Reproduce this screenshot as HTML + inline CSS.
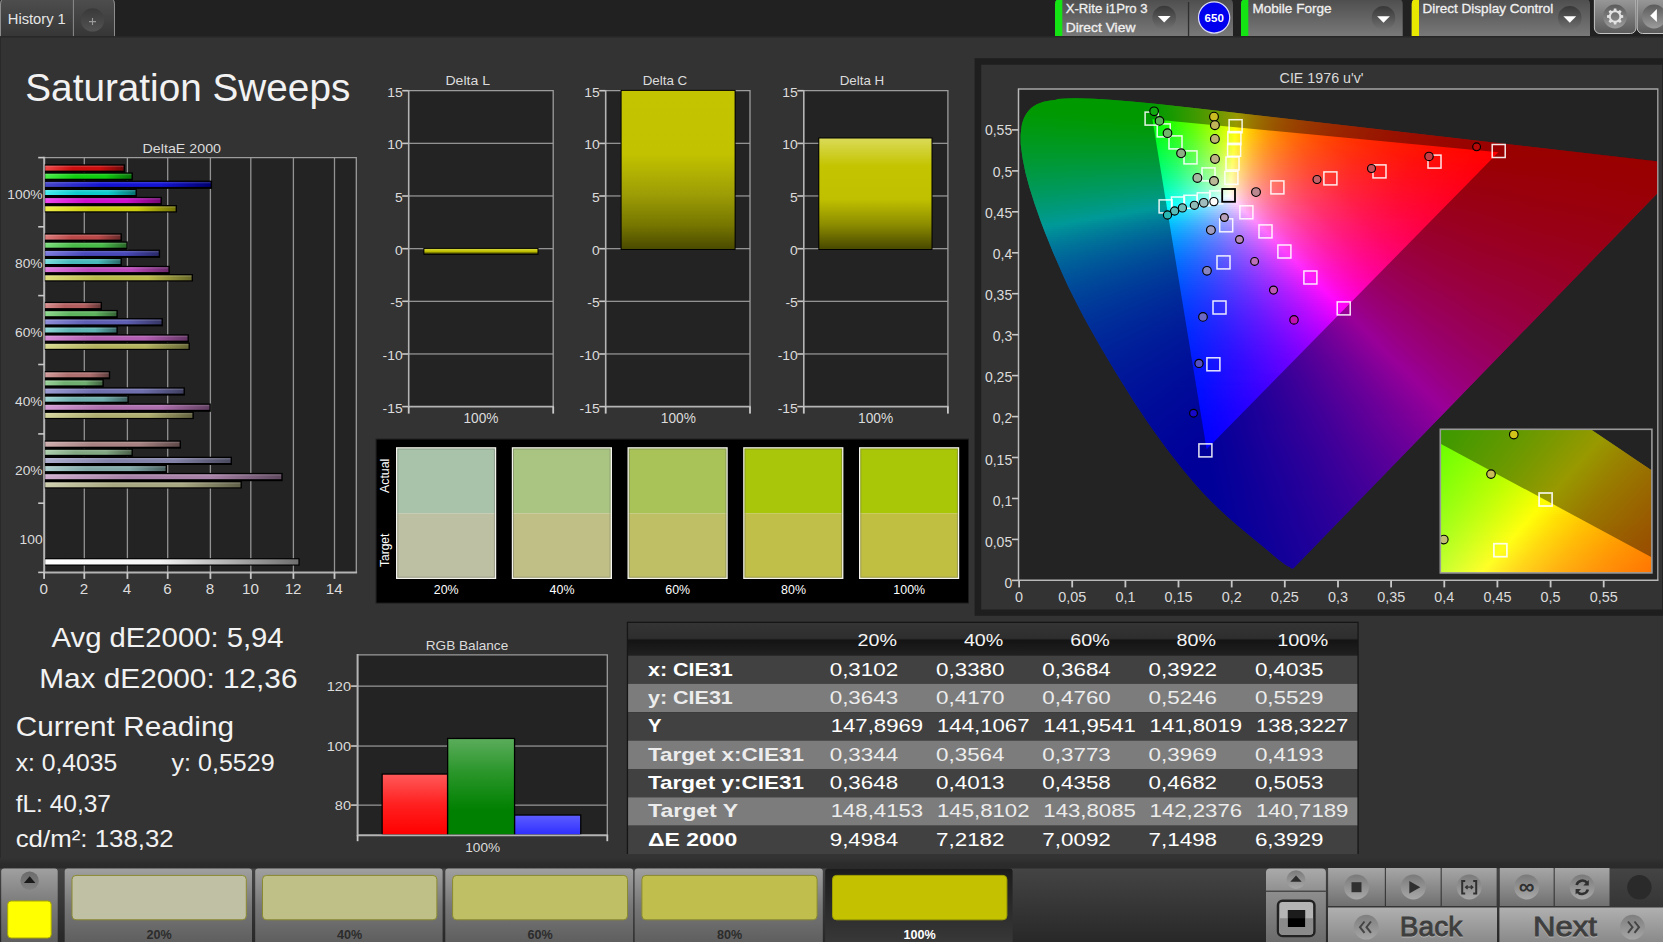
<!DOCTYPE html>
<html><head><meta charset="utf-8"><title>Saturation Sweeps</title>
<style>
html,body{margin:0;padding:0;background:#333;}
body{width:1663px;height:942px;overflow:hidden;position:relative;font-family:"Liberation Sans",sans-serif;}
svg{position:absolute;left:0;top:0;font-family:"Liberation Sans",sans-serif;}
.f{position:absolute;overflow:hidden}
.f i{position:absolute;display:block}
</style></head><body>
<svg width="1663" height="942" viewBox="0 0 1663 942">
<defs>
<linearGradient id="gTab" x1="0" y1="0" x2="0" y2="1"><stop offset="0" stop-color="#4e4e4e"/><stop offset="1" stop-color="#797979"/></linearGradient>
<linearGradient id="gHist" x1="0" y1="0" x2="0" y2="1"><stop offset="0" stop-color="#4e4e4e"/><stop offset="1" stop-color="#363636"/></linearGradient>
<linearGradient id="gDD" x1="0" y1="0" x2="0" y2="1"><stop offset="0" stop-color="#383838"/><stop offset="1" stop-color="#707070"/></linearGradient>
<linearGradient id="gBtn" x1="0" y1="0" x2="0" y2="1"><stop offset="0" stop-color="#4c4c4c"/><stop offset="1" stop-color="#7a7a7a"/></linearGradient>
<linearGradient id="gPlus" x1="0" y1="0" x2="0" y2="1"><stop offset="0" stop-color="#393939"/><stop offset="1" stop-color="#525252"/></linearGradient>
<linearGradient id="gBtn2" x1="0" y1="0" x2="0" y2="1"><stop offset="0" stop-color="#a2a2a2"/><stop offset="1" stop-color="#5a5a5a"/></linearGradient>
<linearGradient id="gDD2" x1="0" y1="0" x2="0" y2="1"><stop offset="0" stop-color="#5a5a5a"/><stop offset="1" stop-color="#9c9c9c"/></linearGradient>
<linearGradient id="b1" x1="0" y1="0" x2="1" y2="0"><stop offset="0" stop-color="#ee4848"/><stop offset=".35" stop-color="#cc0e0e"/><stop offset=".7" stop-color="#cc0e0e"/><stop offset="1" stop-color="#730808"/></linearGradient>
<linearGradient id="b2" x1="0" y1="0" x2="1" y2="0"><stop offset="0" stop-color="#48ee48"/><stop offset=".35" stop-color="#0ecc0e"/><stop offset=".7" stop-color="#0ecc0e"/><stop offset="1" stop-color="#087308"/></linearGradient>
<linearGradient id="b3" x1="0" y1="0" x2="1" y2="0"><stop offset="0" stop-color="#4646c8"/><stop offset=".35" stop-color="#1414d2"/><stop offset=".7" stop-color="#1414d2"/><stop offset="1" stop-color="#00006e"/></linearGradient>
<linearGradient id="b4" x1="0" y1="0" x2="1" y2="0"><stop offset="0" stop-color="#48eeee"/><stop offset=".35" stop-color="#0ecccc"/><stop offset=".7" stop-color="#0ecccc"/><stop offset="1" stop-color="#087373"/></linearGradient>
<linearGradient id="b5" x1="0" y1="0" x2="1" y2="0"><stop offset="0" stop-color="#ee48ee"/><stop offset=".35" stop-color="#cc0ecc"/><stop offset=".7" stop-color="#cc0ecc"/><stop offset="1" stop-color="#730873"/></linearGradient>
<linearGradient id="b6" x1="0" y1="0" x2="1" y2="0"><stop offset="0" stop-color="#eeee48"/><stop offset=".35" stop-color="#cccc0e"/><stop offset=".7" stop-color="#cccc0e"/><stop offset="1" stop-color="#737308"/></linearGradient>
<linearGradient id="b7" x1="0" y1="0" x2="1" y2="0"><stop offset="0" stop-color="#de7b7b"/><stop offset=".35" stop-color="#ba4848"/><stop offset=".7" stop-color="#ba4848"/><stop offset="1" stop-color="#692929"/></linearGradient>
<linearGradient id="b8" x1="0" y1="0" x2="1" y2="0"><stop offset="0" stop-color="#7bde7b"/><stop offset=".35" stop-color="#48ba48"/><stop offset=".7" stop-color="#48ba48"/><stop offset="1" stop-color="#296929"/></linearGradient>
<linearGradient id="b9" x1="0" y1="0" x2="1" y2="0"><stop offset="0" stop-color="#7b7bde"/><stop offset=".35" stop-color="#4848ba"/><stop offset=".7" stop-color="#4848ba"/><stop offset="1" stop-color="#292969"/></linearGradient>
<linearGradient id="b10" x1="0" y1="0" x2="1" y2="0"><stop offset="0" stop-color="#7bdede"/><stop offset=".35" stop-color="#48baba"/><stop offset=".7" stop-color="#48baba"/><stop offset="1" stop-color="#296969"/></linearGradient>
<linearGradient id="b11" x1="0" y1="0" x2="1" y2="0"><stop offset="0" stop-color="#de7bde"/><stop offset=".35" stop-color="#ba48ba"/><stop offset=".7" stop-color="#ba48ba"/><stop offset="1" stop-color="#692969"/></linearGradient>
<linearGradient id="b12" x1="0" y1="0" x2="1" y2="0"><stop offset="0" stop-color="#dede7b"/><stop offset=".35" stop-color="#baba48"/><stop offset=".7" stop-color="#baba48"/><stop offset="1" stop-color="#696929"/></linearGradient>
<linearGradient id="b13" x1="0" y1="0" x2="1" y2="0"><stop offset="0" stop-color="#d98e8e"/><stop offset=".35" stop-color="#b35e5e"/><stop offset=".7" stop-color="#b35e5e"/><stop offset="1" stop-color="#653535"/></linearGradient>
<linearGradient id="b14" x1="0" y1="0" x2="1" y2="0"><stop offset="0" stop-color="#8ed98e"/><stop offset=".35" stop-color="#5eb35e"/><stop offset=".7" stop-color="#5eb35e"/><stop offset="1" stop-color="#356535"/></linearGradient>
<linearGradient id="b15" x1="0" y1="0" x2="1" y2="0"><stop offset="0" stop-color="#8e8ed9"/><stop offset=".35" stop-color="#5e5eb3"/><stop offset=".7" stop-color="#5e5eb3"/><stop offset="1" stop-color="#353565"/></linearGradient>
<linearGradient id="b16" x1="0" y1="0" x2="1" y2="0"><stop offset="0" stop-color="#8ed9d9"/><stop offset=".35" stop-color="#5eb3b3"/><stop offset=".7" stop-color="#5eb3b3"/><stop offset="1" stop-color="#356565"/></linearGradient>
<linearGradient id="b17" x1="0" y1="0" x2="1" y2="0"><stop offset="0" stop-color="#d98ed9"/><stop offset=".35" stop-color="#b35eb3"/><stop offset=".7" stop-color="#b35eb3"/><stop offset="1" stop-color="#653565"/></linearGradient>
<linearGradient id="b18" x1="0" y1="0" x2="1" y2="0"><stop offset="0" stop-color="#d9d98e"/><stop offset=".35" stop-color="#b3b35e"/><stop offset=".7" stop-color="#b3b35e"/><stop offset="1" stop-color="#656535"/></linearGradient>
<linearGradient id="b19" x1="0" y1="0" x2="1" y2="0"><stop offset="0" stop-color="#d49d9d"/><stop offset=".35" stop-color="#ae6f6f"/><stop offset=".7" stop-color="#ae6f6f"/><stop offset="1" stop-color="#623f3f"/></linearGradient>
<linearGradient id="b20" x1="0" y1="0" x2="1" y2="0"><stop offset="0" stop-color="#9dd49d"/><stop offset=".35" stop-color="#6fae6f"/><stop offset=".7" stop-color="#6fae6f"/><stop offset="1" stop-color="#3f623f"/></linearGradient>
<linearGradient id="b21" x1="0" y1="0" x2="1" y2="0"><stop offset="0" stop-color="#9d9dd4"/><stop offset=".35" stop-color="#6f6fae"/><stop offset=".7" stop-color="#6f6fae"/><stop offset="1" stop-color="#3f3f62"/></linearGradient>
<linearGradient id="b22" x1="0" y1="0" x2="1" y2="0"><stop offset="0" stop-color="#9dd4d4"/><stop offset=".35" stop-color="#6faeae"/><stop offset=".7" stop-color="#6faeae"/><stop offset="1" stop-color="#3f6262"/></linearGradient>
<linearGradient id="b23" x1="0" y1="0" x2="1" y2="0"><stop offset="0" stop-color="#d49dd4"/><stop offset=".35" stop-color="#ae6fae"/><stop offset=".7" stop-color="#ae6fae"/><stop offset="1" stop-color="#623f62"/></linearGradient>
<linearGradient id="b24" x1="0" y1="0" x2="1" y2="0"><stop offset="0" stop-color="#d4d49d"/><stop offset=".35" stop-color="#aeae6f"/><stop offset=".7" stop-color="#aeae6f"/><stop offset="1" stop-color="#62623f"/></linearGradient>
<linearGradient id="b25" x1="0" y1="0" x2="1" y2="0"><stop offset="0" stop-color="#cfaeae"/><stop offset=".35" stop-color="#a88282"/><stop offset=".7" stop-color="#a88282"/><stop offset="1" stop-color="#5f4949"/></linearGradient>
<linearGradient id="b26" x1="0" y1="0" x2="1" y2="0"><stop offset="0" stop-color="#aecfae"/><stop offset=".35" stop-color="#82a882"/><stop offset=".7" stop-color="#82a882"/><stop offset="1" stop-color="#495f49"/></linearGradient>
<linearGradient id="b27" x1="0" y1="0" x2="1" y2="0"><stop offset="0" stop-color="#aeaecf"/><stop offset=".35" stop-color="#8282a8"/><stop offset=".7" stop-color="#8282a8"/><stop offset="1" stop-color="#49495f"/></linearGradient>
<linearGradient id="b28" x1="0" y1="0" x2="1" y2="0"><stop offset="0" stop-color="#aecfcf"/><stop offset=".35" stop-color="#82a8a8"/><stop offset=".7" stop-color="#82a8a8"/><stop offset="1" stop-color="#495f5f"/></linearGradient>
<linearGradient id="b29" x1="0" y1="0" x2="1" y2="0"><stop offset="0" stop-color="#cfaecf"/><stop offset=".35" stop-color="#a882a8"/><stop offset=".7" stop-color="#a882a8"/><stop offset="1" stop-color="#5f495f"/></linearGradient>
<linearGradient id="b30" x1="0" y1="0" x2="1" y2="0"><stop offset="0" stop-color="#cfcfae"/><stop offset=".35" stop-color="#a8a882"/><stop offset=".7" stop-color="#a8a882"/><stop offset="1" stop-color="#5f5f49"/></linearGradient>
<linearGradient id="bw" x1="0" y1="0" x2="1" y2="0"><stop offset="0" stop-color="#fff"/><stop offset=".45" stop-color="#f4f4f4"/><stop offset="1" stop-color="#6e6e6e"/></linearGradient>
<linearGradient id="gYL" x1="0" y1="0" x2="0" y2="1"><stop offset="0" stop-color="#d2d23c"/><stop offset=".5" stop-color="#c4c400"/><stop offset="1" stop-color="#3c3c00"/></linearGradient>
<linearGradient id="gYC" x1="0" y1="0" x2="0" y2="1"><stop offset="0" stop-color="#c4c400"/><stop offset=".4" stop-color="#c2c200"/><stop offset=".66" stop-color="#9c9c06"/><stop offset=".85" stop-color="#767600"/><stop offset="1" stop-color="#4a4a00"/></linearGradient>
<linearGradient id="gYH" x1="0" y1="0" x2="0" y2="1"><stop offset="0" stop-color="#dada58"/><stop offset=".25" stop-color="#c4c400"/><stop offset=".55" stop-color="#c0c000"/><stop offset=".78" stop-color="#8c8c00"/><stop offset="1" stop-color="#484800"/></linearGradient>
<linearGradient id="gR" x1="0" y1="0" x2="0" y2="1"><stop offset="0" stop-color="#ff5858"/><stop offset=".5" stop-color="#ff2020"/><stop offset="1" stop-color="#ff0000"/></linearGradient>
<linearGradient id="gG" x1="0" y1="0" x2="0" y2="1"><stop offset="0" stop-color="#5aac5a"/><stop offset=".35" stop-color="#2a962a"/><stop offset=".75" stop-color="#008000"/><stop offset="1" stop-color="#008000"/></linearGradient>
<linearGradient id="gB" x1="0" y1="0" x2="0" y2="1"><stop offset="0" stop-color="#5c5cff"/><stop offset="1" stop-color="#3030ff"/></linearGradient>
<linearGradient id="gTH" x1="0" y1="0" x2="0" y2="1"><stop offset="0" stop-color="#343434"/><stop offset=".47" stop-color="#2e2e2e"/><stop offset=".53" stop-color="#141414"/><stop offset="1" stop-color="#202020"/></linearGradient>
<linearGradient id="gBar" x1="0" y1="0" x2="0" y2="1"><stop offset="0" stop-color="#444"/><stop offset="1" stop-color="#282828"/></linearGradient>
<linearGradient id="gTile" x1="0" y1="0" x2="0" y2="1"><stop offset="0" stop-color="#a0a0a0"/><stop offset=".5" stop-color="#787878"/><stop offset="1" stop-color="#5e5e5e"/></linearGradient>
<linearGradient id="gSel" x1="0" y1="0" x2="0" y2="1"><stop offset="0" stop-color="#1c1c1c"/><stop offset="1" stop-color="#383838"/></linearGradient>
<linearGradient id="gCtl" x1="0" y1="0" x2="0" y2="1"><stop offset="0" stop-color="#a6a6a6"/><stop offset="1" stop-color="#707070"/></linearGradient>
<linearGradient id="gCir" x1="0" y1="0" x2="0" y2="1"><stop offset="0" stop-color="#7a7a7a"/><stop offset="1" stop-color="#a8a8a8"/></linearGradient>
<linearGradient id="gNav" x1="0" y1="0" x2="0" y2="1"><stop offset="0" stop-color="#b0b0b0"/><stop offset="1" stop-color="#888"/></linearGradient>
<linearGradient id="gSh" x1="0" y1="0" x2="0" y2="1"><stop offset="0" stop-color="#333"/><stop offset=".5" stop-color="#2c2c2c"/><stop offset="1" stop-color="#2a2a2a"/></linearGradient>
<linearGradient id="gLP1" x1="0" y1="0" x2="0" y2="1"><stop offset="0" stop-color="#aaa"/><stop offset="1" stop-color="#909090"/></linearGradient>
<linearGradient id="gLP2" x1="0" y1="0" x2="0" y2="1"><stop offset="0" stop-color="#8e8e8e"/><stop offset="1" stop-color="#6a6a6a"/></linearGradient>
</defs>
<rect x="0" y="0" width="1663" height="36.5" fill="#212121"/>
<path d="M0 36.3 V4 Q0 -1 4 -1 H110.5 Q115 -1 115 4 V36.3 Z" fill="url(#gHist)"/>
<path d="M0.5 36.3 V4 Q0.5 0 3 -1 M114.5 36.3 V4 Q114.5 0 112 -1 M73.4 0 V36.3" fill="none" stroke="#8c8c8c" stroke-width="1"/>
<rect x="0" y="36.3" width="1663" height="1.2" fill="#272727"/>
<rect x="0" y="37.5" width="1" height="831" fill="#292929"/>
<text x="7.8" y="23.9" font-size="13.8" fill="#e6e6e6" textLength="58.0" lengthAdjust="spacingAndGlyphs">History 1</text>
<circle cx="92.5" cy="19.9" r="11.7" fill="url(#gPlus)"/>
<path d="M89 21.6 h7 M92.5 18.1 v7" stroke="#9a9a9a" stroke-width="1.1"/>
<path d="M1055.0 36.1 V4 Q1055.0 -1 1060.0 -1 H1228.0 Q1233.0 -1 1233.0 4 V36.1 Z" fill="url(#gTab)"/>
<path d="M1055.0 36.1 V4 Q1055.0 -1 1060.0 -1 H1062.3 V36.1 Z" fill="#14e414"/>
<text x="1065.7" y="13.2" font-size="13.2" fill="#f0f0f0" textLength="82.0" lengthAdjust="spacingAndGlyphs" stroke="#f0f0f0" stroke-width=".3">X-Rite i1Pro 3</text>
<text x="1065.7" y="31.8" font-size="13.2" fill="#f0f0f0" textLength="69.7" lengthAdjust="spacingAndGlyphs" stroke="#f0f0f0" stroke-width=".3">Direct View</text>
<circle cx="1164.2" cy="17.6" r="11.8" fill="url(#gDD)"/>
<path d="M1157.8 15.9 h12.8 l-6.4 6.6 z" fill="#fff"/>
<rect x="1187.9" y="2" width="1.3" height="34" fill="#2e2e2e"/>
<circle cx="1214.1" cy="17.5" r="15.6" fill="#0000ee" stroke="#dcdcfa" stroke-width="1.2"/>
<text x="1214.2" y="22.1" font-size="11.6" fill="#fff" text-anchor="middle" textLength="19.2" lengthAdjust="spacingAndGlyphs" font-weight="bold">650</text>
<path d="M1241.0 36.1 V4 Q1241.0 -1 1246.0 -1 H1397.7 Q1402.7 -1 1402.7 4 V36.1 Z" fill="url(#gTab)"/>
<path d="M1241.0 36.1 V4 Q1241.0 -1 1246.0 -1 H1248.3 V36.1 Z" fill="#14e414"/>
<text x="1252.5" y="13.2" font-size="13.2" fill="#f0f0f0" textLength="79.0" lengthAdjust="spacingAndGlyphs" stroke="#f0f0f0" stroke-width=".3">Mobile Forge</text>
<circle cx="1383.5" cy="17.9" r="11.8" fill="url(#gDD)"/>
<path d="M1377.1 16.2 h12.8 l-6.4 6.6 z" fill="#fff"/>
<path d="M1411.7 36.1 V4 Q1411.7 -1 1416.7 -1 H1585.0 Q1590.0 -1 1590.0 4 V36.1 Z" fill="url(#gTab)"/>
<path d="M1411.7 36.1 V4 Q1411.7 -1 1416.7 -1 H1419.0 V36.1 Z" fill="#e8e800"/>
<text x="1422.5" y="13.2" font-size="13.2" fill="#f0f0f0" textLength="130.8" lengthAdjust="spacingAndGlyphs" stroke="#f0f0f0" stroke-width=".3">Direct Display Control</text>
<circle cx="1569.8" cy="17.9" r="11.8" fill="url(#gDD)"/>
<path d="M1563.4 16.2 h12.8 l-6.4 6.6 z" fill="#fff"/>
<rect x="1594.4" y="-6" width="41.6" height="39.5" rx="5.5" fill="url(#gBtn2)" stroke="#c4c4c4" stroke-width="1"/>
<circle cx="1615.1" cy="16.5" r="11.9" fill="url(#gDD2)"/>
<path d="M1613.87 8.39 L1616.33 8.39 L1616.60 10.38 L1618.37 11.11 L1619.97 9.90 L1621.70 11.63 L1620.49 13.23 L1621.22 15.00 L1623.21 15.27 L1623.21 17.73 L1621.22 18.00 L1620.49 19.77 L1621.70 21.37 L1619.97 23.10 L1618.37 21.89 L1616.60 22.62 L1616.33 24.61 L1613.87 24.61 L1613.60 22.62 L1611.83 21.89 L1610.23 23.10 L1608.50 21.37 L1609.71 19.77 L1608.98 18.00 L1606.99 17.73 L1606.99 15.27 L1608.98 15.00 L1609.71 13.23 L1608.50 11.63 L1610.23 9.90 L1611.83 11.11 L1613.60 10.38 Z M1619.4 16.5 a4.3 4.3 0 1 0 -8.6 0 a4.3 4.3 0 1 0 8.6 0 Z" fill="#e2e2e2" fill-rule="evenodd"/>
<rect x="1637.2" y="-6" width="40" height="39.5" rx="5.5" fill="url(#gBtn2)" stroke="#c4c4c4" stroke-width="1"/>
<circle cx="1654" cy="16.5" r="11.9" fill="url(#gDD2)"/>
<path d="M1656.9 9.1 V22.1 L1650.2 15.7 Z" fill="#fff"/>
<text x="25.3" y="101.0" font-size="38.0" fill="#f2f2f2" textLength="325.0" lengthAdjust="spacingAndGlyphs">Saturation Sweeps</text>
<rect x="44.2" y="157.6" width="312.1" height="414.8" fill="#232323"/>
<rect x="83.65" y="157.6" width="1.3" height="414.8" fill="#929292"/>
<rect x="126.75" y="157.6" width="1.3" height="414.8" fill="#929292"/>
<rect x="167.05" y="157.6" width="1.3" height="414.8" fill="#929292"/>
<rect x="209.75" y="157.6" width="1.3" height="414.8" fill="#929292"/>
<rect x="250.15" y="157.6" width="1.3" height="414.8" fill="#929292"/>
<rect x="292.75" y="157.6" width="1.3" height="414.8" fill="#929292"/>
<rect x="333.85" y="157.6" width="1.3" height="414.8" fill="#929292"/>
<path d="M44.2 157.6 H356.3 V572.4" fill="none" stroke="#9c9c9c" stroke-width="1.3"/>
<path d="M44.2 156.8 V572.4 H357.1" fill="none" stroke="#b4b4b4" stroke-width="2"/>
<rect x="38.2" y="156.8" width="6" height="1.6" fill="#c8c8c8"/>
<rect x="38.2" y="226.0" width="6" height="1.6" fill="#c8c8c8"/>
<rect x="38.2" y="294.8" width="6" height="1.6" fill="#c8c8c8"/>
<rect x="38.2" y="363.7" width="6" height="1.6" fill="#c8c8c8"/>
<rect x="38.2" y="433.1" width="6" height="1.6" fill="#c8c8c8"/>
<rect x="38.2" y="502.4" width="6" height="1.6" fill="#c8c8c8"/>
<rect x="38.2" y="571.6" width="6" height="1.6" fill="#c8c8c8"/>
<rect x="43.2" y="572.4" width="1.8" height="6.5" fill="#c8c8c8"/>
<text x="43.8" y="593.6" font-size="15.2" fill="#dcdcdc" text-anchor="middle">0</text>
<rect x="83.4" y="572.4" width="1.8" height="6.5" fill="#c8c8c8"/>
<text x="84.0" y="593.6" font-size="15.2" fill="#dcdcdc" text-anchor="middle">2</text>
<rect x="126.5" y="572.4" width="1.8" height="6.5" fill="#c8c8c8"/>
<text x="127.1" y="593.6" font-size="15.2" fill="#dcdcdc" text-anchor="middle">4</text>
<rect x="166.8" y="572.4" width="1.8" height="6.5" fill="#c8c8c8"/>
<text x="167.4" y="593.6" font-size="15.2" fill="#dcdcdc" text-anchor="middle">6</text>
<rect x="209.5" y="572.4" width="1.8" height="6.5" fill="#c8c8c8"/>
<text x="210.1" y="593.6" font-size="15.2" fill="#dcdcdc" text-anchor="middle">8</text>
<rect x="249.9" y="572.4" width="1.8" height="6.5" fill="#c8c8c8"/>
<text x="250.5" y="593.6" font-size="15.2" fill="#dcdcdc" text-anchor="middle">10</text>
<rect x="292.5" y="572.4" width="1.8" height="6.5" fill="#c8c8c8"/>
<text x="293.1" y="593.6" font-size="15.2" fill="#dcdcdc" text-anchor="middle">12</text>
<rect x="333.6" y="572.4" width="1.8" height="6.5" fill="#c8c8c8"/>
<text x="334.2" y="593.6" font-size="15.2" fill="#dcdcdc" text-anchor="middle">14</text>
<text x="42.6" y="198.5" font-size="13.4" fill="#dcdcdc" text-anchor="end" textLength="35.3" lengthAdjust="spacingAndGlyphs">100%</text>
<text x="42.6" y="267.6" font-size="13.4" fill="#dcdcdc" text-anchor="end" textLength="27.6" lengthAdjust="spacingAndGlyphs">80%</text>
<text x="42.6" y="336.7" font-size="13.4" fill="#dcdcdc" text-anchor="end" textLength="27.6" lengthAdjust="spacingAndGlyphs">60%</text>
<text x="42.6" y="405.9" font-size="13.4" fill="#dcdcdc" text-anchor="end" textLength="27.6" lengthAdjust="spacingAndGlyphs">40%</text>
<text x="42.6" y="475.0" font-size="13.4" fill="#dcdcdc" text-anchor="end" textLength="27.6" lengthAdjust="spacingAndGlyphs">20%</text>
<text x="42.6" y="544.1" font-size="13.4" fill="#dcdcdc" text-anchor="end" textLength="23.0" lengthAdjust="spacingAndGlyphs">100</text>
<text x="181.8" y="152.8" font-size="13.3" fill="#dcdcdc" text-anchor="middle" textLength="78.5" lengthAdjust="spacingAndGlyphs">DeltaE 2000</text>
<rect x="44.8" y="164.3" width="80.2" height="8.3" fill="#000"/>
<rect x="45.2" y="165.6" width="78.4" height="5" fill="url(#b1)"/>
<rect x="45.2" y="165.6" width="78.4" height="1.5" fill="#fff" opacity=".14"/>
<rect x="44.8" y="172.4" width="88.1" height="8.3" fill="#000"/>
<rect x="45.2" y="173.7" width="86.3" height="5" fill="url(#b2)"/>
<rect x="45.2" y="173.7" width="86.3" height="1.5" fill="#fff" opacity=".14"/>
<rect x="44.8" y="180.6" width="167.3" height="8.3" fill="#000"/>
<rect x="45.2" y="181.9" width="165.5" height="5" fill="url(#b3)"/>
<rect x="45.2" y="181.9" width="165.5" height="1.5" fill="#fff" opacity=".14"/>
<rect x="44.8" y="188.7" width="92.1" height="8.3" fill="#000"/>
<rect x="45.2" y="190.0" width="90.3" height="5" fill="url(#b4)"/>
<rect x="45.2" y="190.0" width="90.3" height="1.5" fill="#fff" opacity=".14"/>
<rect x="44.8" y="196.8" width="117.1" height="8.3" fill="#000"/>
<rect x="45.2" y="198.1" width="115.3" height="5" fill="url(#b5)"/>
<rect x="45.2" y="198.1" width="115.3" height="1.5" fill="#fff" opacity=".14"/>
<rect x="44.8" y="205.0" width="132.2" height="7.5" fill="#000"/>
<rect x="45.2" y="206.3" width="130.4" height="5" fill="url(#b6)"/>
<rect x="45.2" y="206.3" width="130.4" height="1.5" fill="#fff" opacity=".14"/>
<rect x="44.8" y="233.3" width="77.1" height="8.3" fill="#000"/>
<rect x="45.2" y="234.6" width="75.3" height="5" fill="url(#b7)"/>
<rect x="45.2" y="234.6" width="75.3" height="1.5" fill="#fff" opacity=".14"/>
<rect x="44.8" y="241.4" width="83.0" height="8.3" fill="#000"/>
<rect x="45.2" y="242.7" width="81.2" height="5" fill="url(#b8)"/>
<rect x="45.2" y="242.7" width="81.2" height="1.5" fill="#fff" opacity=".14"/>
<rect x="44.8" y="249.6" width="115.3" height="8.3" fill="#000"/>
<rect x="45.2" y="250.9" width="113.5" height="5" fill="url(#b9)"/>
<rect x="45.2" y="250.9" width="113.5" height="1.5" fill="#fff" opacity=".14"/>
<rect x="44.8" y="257.7" width="77.1" height="8.3" fill="#000"/>
<rect x="45.2" y="259.0" width="75.3" height="5" fill="url(#b10)"/>
<rect x="45.2" y="259.0" width="75.3" height="1.5" fill="#fff" opacity=".14"/>
<rect x="44.8" y="265.8" width="125.0" height="8.3" fill="#000"/>
<rect x="45.2" y="267.1" width="123.2" height="5" fill="url(#b11)"/>
<rect x="45.2" y="267.1" width="123.2" height="1.5" fill="#fff" opacity=".14"/>
<rect x="44.8" y="274.0" width="148.2" height="7.5" fill="#000"/>
<rect x="45.2" y="275.3" width="146.4" height="5" fill="url(#b12)"/>
<rect x="45.2" y="275.3" width="146.4" height="1.5" fill="#fff" opacity=".14"/>
<rect x="44.8" y="301.8" width="57.2" height="8.3" fill="#000"/>
<rect x="45.2" y="303.1" width="55.4" height="5" fill="url(#b13)"/>
<rect x="45.2" y="303.1" width="55.4" height="1.5" fill="#fff" opacity=".14"/>
<rect x="44.8" y="309.9" width="73.0" height="8.3" fill="#000"/>
<rect x="45.2" y="311.2" width="71.2" height="5" fill="url(#b14)"/>
<rect x="45.2" y="311.2" width="71.2" height="1.5" fill="#fff" opacity=".14"/>
<rect x="44.8" y="318.1" width="118.1" height="8.3" fill="#000"/>
<rect x="45.2" y="319.4" width="116.3" height="5" fill="url(#b15)"/>
<rect x="45.2" y="319.4" width="116.3" height="1.5" fill="#fff" opacity=".14"/>
<rect x="44.8" y="326.2" width="73.0" height="8.3" fill="#000"/>
<rect x="45.2" y="327.5" width="71.2" height="5" fill="url(#b16)"/>
<rect x="45.2" y="327.5" width="71.2" height="1.5" fill="#fff" opacity=".14"/>
<rect x="44.8" y="334.3" width="144.1" height="8.3" fill="#000"/>
<rect x="45.2" y="335.6" width="142.3" height="5" fill="url(#b17)"/>
<rect x="45.2" y="335.6" width="142.3" height="1.5" fill="#fff" opacity=".14"/>
<rect x="44.8" y="342.5" width="145.1" height="7.5" fill="#000"/>
<rect x="45.2" y="343.8" width="143.3" height="5" fill="url(#b18)"/>
<rect x="45.2" y="343.8" width="143.3" height="1.5" fill="#fff" opacity=".14"/>
<rect x="44.8" y="371.0" width="65.4" height="8.3" fill="#000"/>
<rect x="45.2" y="372.3" width="63.6" height="5" fill="url(#b19)"/>
<rect x="45.2" y="372.3" width="63.6" height="1.5" fill="#fff" opacity=".14"/>
<rect x="44.8" y="379.1" width="59.0" height="8.3" fill="#000"/>
<rect x="45.2" y="380.4" width="57.2" height="5" fill="url(#b20)"/>
<rect x="45.2" y="380.4" width="57.2" height="1.5" fill="#fff" opacity=".14"/>
<rect x="44.8" y="387.3" width="140.1" height="8.3" fill="#000"/>
<rect x="45.2" y="388.6" width="138.3" height="5" fill="url(#b21)"/>
<rect x="45.2" y="388.6" width="138.3" height="1.5" fill="#fff" opacity=".14"/>
<rect x="44.8" y="395.4" width="84.0" height="8.3" fill="#000"/>
<rect x="45.2" y="396.7" width="82.2" height="5" fill="url(#b22)"/>
<rect x="45.2" y="396.7" width="82.2" height="1.5" fill="#fff" opacity=".14"/>
<rect x="44.8" y="403.5" width="166.0" height="8.3" fill="#000"/>
<rect x="45.2" y="404.8" width="164.2" height="5" fill="url(#b23)"/>
<rect x="45.2" y="404.8" width="164.2" height="1.5" fill="#fff" opacity=".14"/>
<rect x="44.8" y="411.6" width="149.0" height="7.5" fill="#000"/>
<rect x="45.2" y="412.9" width="147.2" height="5" fill="url(#b24)"/>
<rect x="45.2" y="412.9" width="147.2" height="1.5" fill="#fff" opacity=".14"/>
<rect x="44.8" y="440.4" width="136.2" height="8.3" fill="#000"/>
<rect x="45.2" y="441.7" width="134.4" height="5" fill="url(#b25)"/>
<rect x="45.2" y="441.7" width="134.4" height="1.5" fill="#fff" opacity=".14"/>
<rect x="44.8" y="448.5" width="88.1" height="8.3" fill="#000"/>
<rect x="45.2" y="449.8" width="86.3" height="5" fill="url(#b26)"/>
<rect x="45.2" y="449.8" width="86.3" height="1.5" fill="#fff" opacity=".14"/>
<rect x="44.8" y="456.7" width="187.2" height="8.3" fill="#000"/>
<rect x="45.2" y="458.0" width="185.4" height="5" fill="url(#b27)"/>
<rect x="45.2" y="458.0" width="185.4" height="1.5" fill="#fff" opacity=".14"/>
<rect x="44.8" y="464.8" width="122.2" height="8.3" fill="#000"/>
<rect x="45.2" y="466.1" width="120.4" height="5" fill="url(#b28)"/>
<rect x="45.2" y="466.1" width="120.4" height="1.5" fill="#fff" opacity=".14"/>
<rect x="44.8" y="472.9" width="237.9" height="8.3" fill="#000"/>
<rect x="45.2" y="474.2" width="236.1" height="5" fill="url(#b29)"/>
<rect x="45.2" y="474.2" width="236.1" height="1.5" fill="#fff" opacity=".14"/>
<rect x="44.8" y="481.0" width="197.1" height="7.5" fill="#000"/>
<rect x="45.2" y="482.3" width="195.3" height="5" fill="url(#b30)"/>
<rect x="45.2" y="482.3" width="195.3" height="1.5" fill="#fff" opacity=".14"/>
<rect x="45.2" y="558.2" width="254.4" height="7.4" fill="#000"/>
<rect x="45.2" y="559.3" width="253.2" height="5.2" fill="url(#bw)"/>
<rect x="408.7" y="90.7" width="144.5" height="315.9" fill="#232323"/>
<rect x="402.2" y="89.9" width="6.5" height="1.6" fill="#c8c8c8"/>
<text x="402.7" y="96.7" font-size="13.7" fill="#dcdcdc" text-anchor="end" textLength="15.5" lengthAdjust="spacingAndGlyphs">15</text>
<rect x="408.7" y="142.7" width="144.5" height="1.3" fill="#929292"/>
<rect x="402.2" y="142.6" width="6.5" height="1.6" fill="#c8c8c8"/>
<text x="402.7" y="149.4" font-size="13.7" fill="#dcdcdc" text-anchor="end" textLength="15.5" lengthAdjust="spacingAndGlyphs">10</text>
<rect x="408.7" y="195.3" width="144.5" height="1.3" fill="#929292"/>
<rect x="402.2" y="195.2" width="6.5" height="1.6" fill="#c8c8c8"/>
<text x="402.7" y="202.0" font-size="13.7" fill="#dcdcdc" text-anchor="end" textLength="7.7" lengthAdjust="spacingAndGlyphs">5</text>
<rect x="408.7" y="248.0" width="144.5" height="1.3" fill="#929292"/>
<rect x="402.2" y="247.9" width="6.5" height="1.6" fill="#c8c8c8"/>
<text x="402.7" y="254.7" font-size="13.7" fill="#dcdcdc" text-anchor="end" textLength="7.7" lengthAdjust="spacingAndGlyphs">0</text>
<rect x="408.7" y="300.7" width="144.5" height="1.3" fill="#929292"/>
<rect x="402.2" y="300.5" width="6.5" height="1.6" fill="#c8c8c8"/>
<text x="402.7" y="307.3" font-size="13.7" fill="#dcdcdc" text-anchor="end" textLength="12.4" lengthAdjust="spacingAndGlyphs">-5</text>
<rect x="408.7" y="353.3" width="144.5" height="1.3" fill="#929292"/>
<rect x="402.2" y="353.2" width="6.5" height="1.6" fill="#c8c8c8"/>
<text x="402.7" y="360.0" font-size="13.7" fill="#dcdcdc" text-anchor="end" textLength="20.1" lengthAdjust="spacingAndGlyphs">-10</text>
<rect x="402.2" y="405.8" width="6.5" height="1.6" fill="#c8c8c8"/>
<text x="402.7" y="412.6" font-size="13.7" fill="#dcdcdc" text-anchor="end" textLength="20.1" lengthAdjust="spacingAndGlyphs">-15</text>
<path d="M408.7 90.7 H553.2 V406.6" fill="none" stroke="#9c9c9c" stroke-width="1.3"/>
<path d="M408.7 89.9 V406.6 H554.0" fill="none" stroke="#b4b4b4" stroke-width="1.6"/>
<rect x="407.8" y="406.6" width="1.8" height="7" fill="#c8c8c8"/>
<rect x="552.3" y="406.6" width="1.8" height="7" fill="#c8c8c8"/>
<text x="467.7" y="84.6" font-size="13.3" fill="#dcdcdc" text-anchor="middle" textLength="44.6" lengthAdjust="spacingAndGlyphs">Delta L</text>
<text x="481.0" y="422.8" font-size="13.9" fill="#dcdcdc" text-anchor="middle" textLength="35.0" lengthAdjust="spacingAndGlyphs">100%</text>
<rect x="423.4" y="247.9" width="115.1" height="6.9" fill="#000"/>
<rect x="424.4" y="248.9" width="113.1" height="4.9" fill="url(#gYL)"/>
<rect x="605.7" y="90.7" width="144.3" height="315.9" fill="#232323"/>
<rect x="599.2" y="89.9" width="6.5" height="1.6" fill="#c8c8c8"/>
<text x="599.7" y="96.7" font-size="13.7" fill="#dcdcdc" text-anchor="end" textLength="15.5" lengthAdjust="spacingAndGlyphs">15</text>
<rect x="605.7" y="142.7" width="144.3" height="1.3" fill="#929292"/>
<rect x="599.2" y="142.6" width="6.5" height="1.6" fill="#c8c8c8"/>
<text x="599.7" y="149.4" font-size="13.7" fill="#dcdcdc" text-anchor="end" textLength="15.5" lengthAdjust="spacingAndGlyphs">10</text>
<rect x="605.7" y="195.3" width="144.3" height="1.3" fill="#929292"/>
<rect x="599.2" y="195.2" width="6.5" height="1.6" fill="#c8c8c8"/>
<text x="599.7" y="202.0" font-size="13.7" fill="#dcdcdc" text-anchor="end" textLength="7.7" lengthAdjust="spacingAndGlyphs">5</text>
<rect x="605.7" y="248.0" width="144.3" height="1.3" fill="#929292"/>
<rect x="599.2" y="247.9" width="6.5" height="1.6" fill="#c8c8c8"/>
<text x="599.7" y="254.7" font-size="13.7" fill="#dcdcdc" text-anchor="end" textLength="7.7" lengthAdjust="spacingAndGlyphs">0</text>
<rect x="605.7" y="300.7" width="144.3" height="1.3" fill="#929292"/>
<rect x="599.2" y="300.5" width="6.5" height="1.6" fill="#c8c8c8"/>
<text x="599.7" y="307.3" font-size="13.7" fill="#dcdcdc" text-anchor="end" textLength="12.4" lengthAdjust="spacingAndGlyphs">-5</text>
<rect x="605.7" y="353.3" width="144.3" height="1.3" fill="#929292"/>
<rect x="599.2" y="353.2" width="6.5" height="1.6" fill="#c8c8c8"/>
<text x="599.7" y="360.0" font-size="13.7" fill="#dcdcdc" text-anchor="end" textLength="20.1" lengthAdjust="spacingAndGlyphs">-10</text>
<rect x="599.2" y="405.8" width="6.5" height="1.6" fill="#c8c8c8"/>
<text x="599.7" y="412.6" font-size="13.7" fill="#dcdcdc" text-anchor="end" textLength="20.1" lengthAdjust="spacingAndGlyphs">-15</text>
<path d="M605.7 90.7 H750.0 V406.6" fill="none" stroke="#9c9c9c" stroke-width="1.3"/>
<path d="M605.7 89.9 V406.6 H750.8" fill="none" stroke="#b4b4b4" stroke-width="1.6"/>
<rect x="604.8" y="406.6" width="1.8" height="7" fill="#c8c8c8"/>
<rect x="749.1" y="406.6" width="1.8" height="7" fill="#c8c8c8"/>
<text x="665.0" y="84.6" font-size="13.3" fill="#dcdcdc" text-anchor="middle" textLength="44.6" lengthAdjust="spacingAndGlyphs">Delta C</text>
<text x="678.3" y="422.8" font-size="13.9" fill="#dcdcdc" text-anchor="middle" textLength="35.0" lengthAdjust="spacingAndGlyphs">100%</text>
<rect x="620.6" y="89.9" width="115.0" height="160.1" fill="#000"/>
<rect x="621.6" y="90.9" width="113.0" height="158.1" fill="url(#gYC)"/>
<rect x="803.8" y="90.7" width="144.1" height="315.9" fill="#232323"/>
<rect x="797.3" y="89.9" width="6.5" height="1.6" fill="#c8c8c8"/>
<text x="797.8" y="96.7" font-size="13.7" fill="#dcdcdc" text-anchor="end" textLength="15.5" lengthAdjust="spacingAndGlyphs">15</text>
<rect x="803.8" y="142.7" width="144.1" height="1.3" fill="#929292"/>
<rect x="797.3" y="142.6" width="6.5" height="1.6" fill="#c8c8c8"/>
<text x="797.8" y="149.4" font-size="13.7" fill="#dcdcdc" text-anchor="end" textLength="15.5" lengthAdjust="spacingAndGlyphs">10</text>
<rect x="803.8" y="195.3" width="144.1" height="1.3" fill="#929292"/>
<rect x="797.3" y="195.2" width="6.5" height="1.6" fill="#c8c8c8"/>
<text x="797.8" y="202.0" font-size="13.7" fill="#dcdcdc" text-anchor="end" textLength="7.7" lengthAdjust="spacingAndGlyphs">5</text>
<rect x="803.8" y="248.0" width="144.1" height="1.3" fill="#929292"/>
<rect x="797.3" y="247.9" width="6.5" height="1.6" fill="#c8c8c8"/>
<text x="797.8" y="254.7" font-size="13.7" fill="#dcdcdc" text-anchor="end" textLength="7.7" lengthAdjust="spacingAndGlyphs">0</text>
<rect x="803.8" y="300.7" width="144.1" height="1.3" fill="#929292"/>
<rect x="797.3" y="300.5" width="6.5" height="1.6" fill="#c8c8c8"/>
<text x="797.8" y="307.3" font-size="13.7" fill="#dcdcdc" text-anchor="end" textLength="12.4" lengthAdjust="spacingAndGlyphs">-5</text>
<rect x="803.8" y="353.3" width="144.1" height="1.3" fill="#929292"/>
<rect x="797.3" y="353.2" width="6.5" height="1.6" fill="#c8c8c8"/>
<text x="797.8" y="360.0" font-size="13.7" fill="#dcdcdc" text-anchor="end" textLength="20.1" lengthAdjust="spacingAndGlyphs">-10</text>
<rect x="797.3" y="405.8" width="6.5" height="1.6" fill="#c8c8c8"/>
<text x="797.8" y="412.6" font-size="13.7" fill="#dcdcdc" text-anchor="end" textLength="20.1" lengthAdjust="spacingAndGlyphs">-15</text>
<path d="M803.8 90.7 H947.9 V406.6" fill="none" stroke="#9c9c9c" stroke-width="1.3"/>
<path d="M803.8 89.9 V406.6 H948.7" fill="none" stroke="#b4b4b4" stroke-width="1.6"/>
<rect x="802.9" y="406.6" width="1.8" height="7" fill="#c8c8c8"/>
<rect x="947.0" y="406.6" width="1.8" height="7" fill="#c8c8c8"/>
<text x="862.0" y="84.6" font-size="13.3" fill="#dcdcdc" text-anchor="middle" textLength="44.6" lengthAdjust="spacingAndGlyphs">Delta H</text>
<text x="875.6" y="422.8" font-size="13.9" fill="#dcdcdc" text-anchor="middle" textLength="35.0" lengthAdjust="spacingAndGlyphs">100%</text>
<rect x="818.3" y="137.5" width="114.2" height="112.5" fill="#000"/>
<rect x="819.3" y="138.5" width="112.2" height="110.5" fill="url(#gYH)"/>
<rect x="375.5" y="438.6" width="593.5" height="165" fill="#202020"/>
<rect x="376.6" y="439.6" width="591.5" height="163" fill="#000"/>
<rect x="396.0" y="447.2" width="100.2" height="131.8" fill="#f4f4ec"/>
<rect x="397.3" y="448.5" width="97.6" height="64.9" fill="#a8c3aa"/>
<rect x="397.3" y="513.4" width="97.6" height="64.3" fill="#bec0a3"/>
<rect x="397.8" y="449" width="96.6" height="128.2" fill="none" stroke="#555" stroke-opacity=".35" stroke-width="1"/>
<text x="446.2" y="593.5" font-size="12.4" fill="#fff" text-anchor="middle">20%</text>
<rect x="511.8" y="447.2" width="100.2" height="131.8" fill="#f4f4ec"/>
<rect x="513.0" y="448.5" width="97.6" height="64.9" fill="#aac482"/>
<rect x="513.0" y="513.4" width="97.6" height="64.3" fill="#c0c086"/>
<rect x="513.5" y="449" width="96.6" height="128.2" fill="none" stroke="#555" stroke-opacity=".35" stroke-width="1"/>
<text x="562.0" y="593.5" font-size="12.4" fill="#fff" text-anchor="middle">40%</text>
<rect x="627.5" y="447.2" width="100.2" height="131.8" fill="#f4f4ec"/>
<rect x="628.8" y="448.5" width="97.6" height="64.9" fill="#a9c358"/>
<rect x="628.8" y="513.4" width="97.6" height="64.3" fill="#bfbf66"/>
<rect x="629.3" y="449" width="96.6" height="128.2" fill="none" stroke="#555" stroke-opacity=".35" stroke-width="1"/>
<text x="677.7" y="593.5" font-size="12.4" fill="#fff" text-anchor="middle">60%</text>
<rect x="743.2" y="447.2" width="100.2" height="131.8" fill="#f4f4ec"/>
<rect x="744.5" y="448.5" width="97.6" height="64.9" fill="#a9c60a"/>
<rect x="744.5" y="513.4" width="97.6" height="64.3" fill="#c0bf4a"/>
<rect x="745.0" y="449" width="96.6" height="128.2" fill="none" stroke="#555" stroke-opacity=".35" stroke-width="1"/>
<text x="793.5" y="593.5" font-size="12.4" fill="#fff" text-anchor="middle">80%</text>
<rect x="859.0" y="447.2" width="100.2" height="131.8" fill="#f4f4ec"/>
<rect x="860.3" y="448.5" width="97.6" height="64.9" fill="#a9c607"/>
<rect x="860.3" y="513.4" width="97.6" height="64.3" fill="#c0bf42"/>
<rect x="860.8" y="449" width="96.6" height="128.2" fill="none" stroke="#555" stroke-opacity=".35" stroke-width="1"/>
<text x="909.2" y="593.5" font-size="12.4" fill="#fff" text-anchor="middle">100%</text>
<text transform="translate(389.2 493) rotate(-90)" font-size="13.2" fill="#fff" textLength="34.3" lengthAdjust="spacingAndGlyphs">Actual</text>
<text transform="translate(389.2 567) rotate(-90)" font-size="13.2" fill="#fff" textLength="33.4" lengthAdjust="spacingAndGlyphs">Target</text>
<rect x="974.6" y="58.2" width="700" height="557.6" fill="#1e1e1e"/>
<rect x="981.2" y="64.7" width="681" height="544.8" fill="#333"/>
<rect x="1019" y="89" width="639" height="492" fill="#232323"/>
<text x="51.6" y="647.3" font-size="28.0" fill="#f2f2f2" textLength="232.0" lengthAdjust="spacingAndGlyphs">Avg dE2000: 5,94</text>
<text x="39.2" y="688.0" font-size="28.0" fill="#f2f2f2" textLength="258.3" lengthAdjust="spacingAndGlyphs">Max dE2000: 12,36</text>
<text x="15.7" y="735.5" font-size="28.0" fill="#f2f2f2" textLength="218.3" lengthAdjust="spacingAndGlyphs">Current Reading</text>
<text x="15.7" y="770.9" font-size="23.4" fill="#f2f2f2" textLength="101.6" lengthAdjust="spacingAndGlyphs">x: 0,4035</text>
<text x="171.6" y="770.9" font-size="23.4" fill="#f2f2f2" textLength="103.0" lengthAdjust="spacingAndGlyphs">y: 0,5529</text>
<text x="15.7" y="812.3" font-size="23.4" fill="#f2f2f2" textLength="95.3" lengthAdjust="spacingAndGlyphs">fL: 40,37</text>
<text x="15.7" y="846.5" font-size="23.4" fill="#f2f2f2" textLength="158.0" lengthAdjust="spacingAndGlyphs">cd/m²: 138,32</text>
<rect x="357.6" y="654.8" width="249.7" height="180.4" fill="#232323"/>
<rect x="357.6" y="685.5" width="249.7" height="1.3" fill="#929292"/>
<rect x="351.1" y="685.3" width="6.5" height="1.6" fill="#c8c8c8"/>
<text x="351.0" y="691.0" font-size="13.6" fill="#dcdcdc" text-anchor="end" textLength="24.3" lengthAdjust="spacingAndGlyphs">120</text>
<rect x="357.6" y="745.4" width="249.7" height="1.3" fill="#929292"/>
<rect x="351.1" y="745.2" width="6.5" height="1.6" fill="#c8c8c8"/>
<text x="351.0" y="750.9" font-size="13.6" fill="#dcdcdc" text-anchor="end" textLength="24.3" lengthAdjust="spacingAndGlyphs">100</text>
<rect x="357.6" y="804.5" width="249.7" height="1.3" fill="#929292"/>
<rect x="351.1" y="804.3" width="6.5" height="1.6" fill="#c8c8c8"/>
<text x="351.0" y="810.0" font-size="13.6" fill="#dcdcdc" text-anchor="end" textLength="16.2" lengthAdjust="spacingAndGlyphs">80</text>
<path d="M357.6 654.8 H607.3 V835.2" fill="none" stroke="#9c9c9c" stroke-width="1.3"/>
<path d="M357.6 654.0 V835.2 H608.1" fill="none" stroke="#b4b4b4" stroke-width="2"/>
<rect x="356.7" y="835.2" width="1.8" height="6" fill="#c8c8c8"/>
<rect x="606.4" y="835.2" width="1.8" height="6" fill="#c8c8c8"/>
<rect x="381.5" y="773.4" width="66.7" height="60.8" fill="#000"/>
<rect x="382.8" y="774.7" width="64.1" height="59.5" fill="url(#gR)"/>
<rect x="447.0" y="737.8" width="68.2" height="96.4" fill="#000"/>
<rect x="448.3" y="739.1" width="65.6" height="95.1" fill="url(#gG)"/>
<rect x="514.0" y="814.4" width="67.4" height="19.8" fill="#000"/>
<rect x="515.3" y="815.7" width="64.8" height="18.5" fill="url(#gB)"/>
<text x="467.0" y="649.8" font-size="13.3" fill="#dcdcdc" text-anchor="middle" textLength="82.5" lengthAdjust="spacingAndGlyphs">RGB Balance</text>
<text x="482.7" y="851.8" font-size="13.4" fill="#dcdcdc" text-anchor="middle" textLength="35.0" lengthAdjust="spacingAndGlyphs">100%</text>
<rect x="626.8" y="621.7" width="731.9" height="232.3" fill="#161616"/>
<rect x="628.1" y="623.0" width="729.3" height="32.6" fill="url(#gTH)"/>
<text x="877.3" y="645.9" font-size="16.2" fill="#f4f4f4" text-anchor="middle" textLength="39.4" lengthAdjust="spacingAndGlyphs">20%</text>
<text x="983.6" y="645.9" font-size="16.2" fill="#f4f4f4" text-anchor="middle" textLength="39.4" lengthAdjust="spacingAndGlyphs">40%</text>
<text x="1090.0" y="645.9" font-size="16.2" fill="#f4f4f4" text-anchor="middle" textLength="39.4" lengthAdjust="spacingAndGlyphs">60%</text>
<text x="1196.3" y="645.9" font-size="16.2" fill="#f4f4f4" text-anchor="middle" textLength="39.4" lengthAdjust="spacingAndGlyphs">80%</text>
<text x="1302.7" y="645.9" font-size="16.2" fill="#f4f4f4" text-anchor="middle" textLength="51.0" lengthAdjust="spacingAndGlyphs">100%</text>
<rect x="628.1" y="655.6" width="729.3" height="28.39" fill="#414141"/>
<text x="648.0" y="675.5" font-size="18.2" fill="#fff" textLength="84.8" lengthAdjust="spacingAndGlyphs" font-weight="bold">x: CIE31</text>
<text x="829.7" y="675.5" font-size="18.2" fill="#fff" textLength="68.5" lengthAdjust="spacingAndGlyphs">0,3102</text>
<text x="936.0" y="675.5" font-size="18.2" fill="#fff" textLength="68.5" lengthAdjust="spacingAndGlyphs">0,3380</text>
<text x="1042.3" y="675.5" font-size="18.2" fill="#fff" textLength="68.5" lengthAdjust="spacingAndGlyphs">0,3684</text>
<text x="1148.6" y="675.5" font-size="18.2" fill="#fff" textLength="68.5" lengthAdjust="spacingAndGlyphs">0,3922</text>
<text x="1254.9" y="675.5" font-size="18.2" fill="#fff" textLength="68.5" lengthAdjust="spacingAndGlyphs">0,4035</text>
<rect x="628.1" y="683.9" width="729.3" height="28.39" fill="#7c7c7c"/>
<text x="648.0" y="703.8" font-size="18.2" fill="#ececec" textLength="84.8" lengthAdjust="spacingAndGlyphs" font-weight="bold">y: CIE31</text>
<text x="829.7" y="703.8" font-size="18.2" fill="#ececec" textLength="68.5" lengthAdjust="spacingAndGlyphs">0,3643</text>
<text x="936.0" y="703.8" font-size="18.2" fill="#ececec" textLength="68.5" lengthAdjust="spacingAndGlyphs">0,4170</text>
<text x="1042.3" y="703.8" font-size="18.2" fill="#ececec" textLength="68.5" lengthAdjust="spacingAndGlyphs">0,4760</text>
<text x="1148.6" y="703.8" font-size="18.2" fill="#ececec" textLength="68.5" lengthAdjust="spacingAndGlyphs">0,5246</text>
<text x="1254.9" y="703.8" font-size="18.2" fill="#ececec" textLength="68.5" lengthAdjust="spacingAndGlyphs">0,5529</text>
<rect x="628.1" y="712.3" width="729.3" height="28.39" fill="#414141"/>
<text x="648.0" y="732.2" font-size="18.2" fill="#fff" textLength="13.5" lengthAdjust="spacingAndGlyphs" font-weight="bold">Y</text>
<text x="830.7" y="732.2" font-size="18.2" fill="#fff" textLength="92.5" lengthAdjust="spacingAndGlyphs">147,8969</text>
<text x="937.0" y="732.2" font-size="18.2" fill="#fff" textLength="92.5" lengthAdjust="spacingAndGlyphs">144,1067</text>
<text x="1043.3" y="732.2" font-size="18.2" fill="#fff" textLength="92.5" lengthAdjust="spacingAndGlyphs">141,9541</text>
<text x="1149.6" y="732.2" font-size="18.2" fill="#fff" textLength="92.5" lengthAdjust="spacingAndGlyphs">141,8019</text>
<text x="1255.9" y="732.2" font-size="18.2" fill="#fff" textLength="92.5" lengthAdjust="spacingAndGlyphs">138,3227</text>
<rect x="628.1" y="740.6" width="729.3" height="28.39" fill="#7c7c7c"/>
<text x="648.0" y="760.5" font-size="18.2" fill="#ececec" textLength="156.0" lengthAdjust="spacingAndGlyphs" font-weight="bold">Target x:CIE31</text>
<text x="829.7" y="760.5" font-size="18.2" fill="#ececec" textLength="68.5" lengthAdjust="spacingAndGlyphs">0,3344</text>
<text x="936.0" y="760.5" font-size="18.2" fill="#ececec" textLength="68.5" lengthAdjust="spacingAndGlyphs">0,3564</text>
<text x="1042.3" y="760.5" font-size="18.2" fill="#ececec" textLength="68.5" lengthAdjust="spacingAndGlyphs">0,3773</text>
<text x="1148.6" y="760.5" font-size="18.2" fill="#ececec" textLength="68.5" lengthAdjust="spacingAndGlyphs">0,3969</text>
<text x="1254.9" y="760.5" font-size="18.2" fill="#ececec" textLength="68.5" lengthAdjust="spacingAndGlyphs">0,4193</text>
<rect x="628.1" y="769.0" width="729.3" height="28.39" fill="#414141"/>
<text x="648.0" y="788.9" font-size="18.2" fill="#fff" textLength="156.0" lengthAdjust="spacingAndGlyphs" font-weight="bold">Target y:CIE31</text>
<text x="829.7" y="788.9" font-size="18.2" fill="#fff" textLength="68.5" lengthAdjust="spacingAndGlyphs">0,3648</text>
<text x="936.0" y="788.9" font-size="18.2" fill="#fff" textLength="68.5" lengthAdjust="spacingAndGlyphs">0,4013</text>
<text x="1042.3" y="788.9" font-size="18.2" fill="#fff" textLength="68.5" lengthAdjust="spacingAndGlyphs">0,4358</text>
<text x="1148.6" y="788.9" font-size="18.2" fill="#fff" textLength="68.5" lengthAdjust="spacingAndGlyphs">0,4682</text>
<text x="1254.9" y="788.9" font-size="18.2" fill="#fff" textLength="68.5" lengthAdjust="spacingAndGlyphs">0,5053</text>
<rect x="628.1" y="797.3" width="729.3" height="28.39" fill="#7c7c7c"/>
<text x="648.0" y="817.2" font-size="18.2" fill="#ececec" textLength="90.2" lengthAdjust="spacingAndGlyphs" font-weight="bold">Target Y</text>
<text x="830.7" y="817.2" font-size="18.2" fill="#ececec" textLength="92.5" lengthAdjust="spacingAndGlyphs">148,4153</text>
<text x="937.0" y="817.2" font-size="18.2" fill="#ececec" textLength="92.5" lengthAdjust="spacingAndGlyphs">145,8102</text>
<text x="1043.3" y="817.2" font-size="18.2" fill="#ececec" textLength="92.5" lengthAdjust="spacingAndGlyphs">143,8085</text>
<text x="1149.6" y="817.2" font-size="18.2" fill="#ececec" textLength="92.5" lengthAdjust="spacingAndGlyphs">142,2376</text>
<text x="1255.9" y="817.2" font-size="18.2" fill="#ececec" textLength="92.5" lengthAdjust="spacingAndGlyphs">140,7189</text>
<rect x="628.1" y="825.7" width="729.3" height="28.39" fill="#414141"/>
<text x="648.0" y="845.6" font-size="18.2" fill="#fff" textLength="89.3" lengthAdjust="spacingAndGlyphs" font-weight="bold">ΔE 2000</text>
<text x="829.7" y="845.6" font-size="18.2" fill="#fff" textLength="68.5" lengthAdjust="spacingAndGlyphs">9,4984</text>
<text x="936.0" y="845.6" font-size="18.2" fill="#fff" textLength="68.5" lengthAdjust="spacingAndGlyphs">7,2182</text>
<text x="1042.3" y="845.6" font-size="18.2" fill="#fff" textLength="68.5" lengthAdjust="spacingAndGlyphs">7,0092</text>
<text x="1148.6" y="845.6" font-size="18.2" fill="#fff" textLength="68.5" lengthAdjust="spacingAndGlyphs">7,1498</text>
<text x="1254.9" y="845.6" font-size="18.2" fill="#fff" textLength="68.5" lengthAdjust="spacingAndGlyphs">6,3929</text>
<rect x="0" y="858" width="1663" height="11" fill="url(#gSh)"/>
<rect x="0" y="868.5" width="1663" height="73.5" fill="url(#gBar)"/>
<path d="M1.2 943 V871.5 Q1.2 868.5 4.2 868.5 H54.7 Q57.7 868.5 57.7 871.5 V943 Z" fill="url(#gTile)"/>
<circle cx="29.6" cy="880.8" r="9.2" fill="url(#gCir)" opacity=".8"/><circle cx="29.6" cy="880.8" r="9.2" fill="#444" opacity=".35"/>
<path d="M23.9 883 H35.4 L29.65 876.2 Z" fill="#1a1a1a"/>
<rect x="7.7" y="901" width="43.5" height="37" rx="3.5" fill="#ffff00" stroke="#a8a800" stroke-width="1"/>
<path d="M64.7 943 V871.5 Q64.7 868.5 67.7 868.5 H249.0 Q252.0 868.5 252.0 871.5 V943 Z" fill="url(#gTile)"/>
<rect x="72.0" y="875.4" width="174.3" height="44.4" rx="4" fill="#bfc0a4" stroke="#8a8a30" stroke-width="1"/>
<text x="159.2" y="939.0" font-size="12.6" fill="#2c2c2c" text-anchor="middle" font-weight="bold">20%</text>
<path d="M255.2 943 V871.5 Q255.2 868.5 258.2 868.5 H439.6 Q442.6 868.5 442.6 871.5 V943 Z" fill="url(#gTile)"/>
<rect x="262.5" y="875.4" width="174.4" height="44.4" rx="4" fill="#bfc087" stroke="#8a8a30" stroke-width="1"/>
<text x="349.7" y="939.0" font-size="12.6" fill="#2c2c2c" text-anchor="middle" font-weight="bold">40%</text>
<path d="M445.3 943 V871.5 Q445.3 868.5 448.3 868.5 H630.2 Q633.2 868.5 633.2 871.5 V943 Z" fill="url(#gTile)"/>
<rect x="452.6" y="875.4" width="174.9" height="44.4" rx="4" fill="#bfbf66" stroke="#8a8a30" stroke-width="1"/>
<text x="540.0" y="939.0" font-size="12.6" fill="#2c2c2c" text-anchor="middle" font-weight="bold">60%</text>
<path d="M634.6 943 V871.5 Q634.6 868.5 637.6 868.5 H819.8 Q822.8 868.5 822.8 871.5 V943 Z" fill="url(#gTile)"/>
<rect x="641.9" y="875.4" width="175.2" height="44.4" rx="4" fill="#c0bf4e" stroke="#8a8a30" stroke-width="1"/>
<text x="729.5" y="939.0" font-size="12.6" fill="#2c2c2c" text-anchor="middle" font-weight="bold">80%</text>
<path d="M825.2 943 V871.5 Q825.2 868.5 828.2 868.5 H1009.6 Q1012.6 868.5 1012.6 871.5 V943 Z" fill="url(#gSel)"/>
<rect x="832.5" y="875.4" width="174.4" height="44.4" rx="4" fill="#c4c200" stroke="#a0a000" stroke-width="1"/>
<text x="919.7" y="939.0" font-size="12.6" fill="#fff" text-anchor="middle" font-weight="bold">100%</text>
<path d="M1266 891.2 V872.6 Q1266 868.6 1270 868.6 H1322 Q1325.9 868.6 1325.9 872.6 V891.2 Z" fill="url(#gLP1)"/>
<rect x="1266" y="891.2" width="59.9" height="52" fill="url(#gLP2)"/>
<rect x="1266" y="890.6" width="59.9" height="1.2" fill="#3c3c3c"/>
<circle cx="1296" cy="879.6" r="9.4" fill="url(#gCir)"/>
<path d="M1290.3 881.8 H1301.7 L1296 875.4 Z" fill="#2c2c2c"/>
<rect x="1278" y="900.7" width="36.4" height="35.3" rx="4.5" fill="#b4b4b4" stroke="#222" stroke-width="2.5"/>
<path d="M1279.3 918.3 H1313.1 V931 Q1313.1 934.7 1309.4 934.7 H1283 Q1279.3 934.7 1279.3 931 Z" fill="#8a8a8a"/>
<rect x="1287.9" y="910.1" width="17.2" height="16.9" fill="#000"/>
<rect x="1287.9" y="910.1" width="17.2" height="8.2" fill="#1c1c1c"/>
<rect x="1328.1" y="868" width="56.7" height="38" fill="url(#gCtl)"/>
<circle cx="1356.5" cy="887" r="12.5" fill="url(#gCir)"/>
<rect x="1386.0" y="868" width="54.6" height="38" fill="url(#gCtl)"/>
<circle cx="1413.3" cy="887" r="12.5" fill="url(#gCir)"/>
<rect x="1441.8" y="868" width="54.8" height="38" fill="url(#gCtl)"/>
<circle cx="1469.2" cy="887" r="12.5" fill="url(#gCir)"/>
<rect x="1499.8" y="868" width="53.8" height="38" fill="url(#gCtl)"/>
<circle cx="1526.7" cy="887" r="12.5" fill="url(#gCir)"/>
<rect x="1554.8" y="868" width="54.7" height="38" fill="url(#gCtl)"/>
<circle cx="1582.2" cy="887" r="12.5" fill="url(#gCir)"/>
<rect x="1351.5" y="882.2" width="10" height="10" fill="#303030"/>
<path d="M1409.3 881 V893.6 L1420.3 887.3 Z" fill="#303030"/>
<path d="M1465.2 881 h-3 v12.5 h3 M1473.2 881 h3 v12.5 h-3" fill="none" stroke="#303030" stroke-width="2"/>
<path d="M1466.7 887.2 h5 M1467.6 885.5 l-2 1.7 l2 1.7 M1470.8 885.5 l2 1.7 l-2 1.7" fill="none" stroke="#303030" stroke-width="1.3"/>
<text x="1526.7" y="893.5" font-size="22.0" fill="#303030" text-anchor="middle" font-weight="bold">∞</text>
<path d="M1576.6 885 a6 6 0 0 1 10.5 -2.2 M1587.8 889.5 a6 6 0 0 1 -10.5 2.2" fill="none" stroke="#303030" stroke-width="2.6"/>
<path d="M1588.8 880 v5.5 h-5.5 Z M1575.6 894.5 v-5.5 h5.5 Z" fill="#303030"/>
<circle cx="1639.4" cy="887.3" r="12.2" fill="#2a2a2a"/>
<rect x="1328" y="907.5" width="169" height="36" fill="url(#gNav)"/>
<rect x="1499.4" y="907.5" width="165" height="36" fill="url(#gNav)"/>
<circle cx="1366.2" cy="927.2" r="12.4" fill="url(#gCir)" opacity=".9"/>
<circle cx="1632.5" cy="927.2" r="12.4" fill="url(#gCir)" opacity=".9"/>
<path d="M1364.5 921.5 l-4.5 5.7 l4.5 5.7 M1371 921.5 l-4.5 5.7 l4.5 5.7" fill="none" stroke="#444" stroke-width="2"/>
<path d="M1628 921.5 l4.5 5.7 l-4.5 5.7 M1634.5 921.5 l4.5 5.7 l-4.5 5.7" fill="none" stroke="#444" stroke-width="2"/>
<text x="1399.8" y="936.9" font-size="28.2" fill="#b4b4b4" textLength="62.5" lengthAdjust="spacingAndGlyphs" stroke="#b4b4b4" stroke-width=".9">Back</text>
<text x="1399.8" y="935.7" font-size="28.2" fill="#3e3e3e" textLength="62.5" lengthAdjust="spacingAndGlyphs" stroke="#3e3e3e" stroke-width=".9">Back</text>
<text x="1533.0" y="936.9" font-size="28.2" fill="#b4b4b4" textLength="64.0" lengthAdjust="spacingAndGlyphs" stroke="#b4b4b4" stroke-width=".9">Next</text>
<text x="1533.0" y="935.7" font-size="28.2" fill="#3e3e3e" textLength="64.0" lengthAdjust="spacingAndGlyphs" stroke="#3e3e3e" stroke-width=".9">Next</text>
</svg>
<div class="f" style="left:1019px;top:89px;width:639px;height:492px;clip-path:polygon(660.6px 74.8px,172.6px 18.8px,136.2px 14.8px,112.4px 12.5px,91.0px 10.7px,74.7px 9.8px,56.3px 9.3px,47.3px 9.4px,38.3px 9.9px,37.7px 10.2px,37.5px 10.8px,29.9px 11.7px,24.7px 12.8px,19.8px 14.4px,17.4px 15.5px,13.1px 18.3px,11.2px 19.9px,9.4px 21.9px,7.8px 24.0px,6.3px 26.4px,5.0px 29.0px,3.9px 31.9px,3.0px 35.0px,2.4px 38.4px,1.6px 45.9px,1.7px 54.7px,2.2px 59.6px,3.8px 70.6px,6.4px 83.4px,10.3px 98.0px,15.5px 114.6px,22.1px 133.2px,25.9px 143.2px,34.5px 164.4px,44.3px 186.8px,49.7px 198.4px,55.5px 210.1px,61.6px 222.0px,68.0px 233.9px,81.3px 257.4px,94.9px 280.4px,108.6px 302.6px,115.3px 313.2px,128.5px 333.0px,135.0px 342.3px,147.3px 359.3px,153.3px 367.1px,164.7px 381.5px,175.0px 393.8px,184.1px 403.9px,192.2px 412.3px,199.6px 419.4px,209.9px 428.9px,219.1px 436.9px,259.7px 470.7px,266.7px 476.0px,269.3px 477.5px,270.9px 477.8px,271.5px 479.0px,272.1px 479.3px,273.0px 479.6px,273.8px 479.5px,274.8px 478.9px,664.8px 77.0px,665.0px 76.2px,664.9px 75.3px,664.5px 74.5px,663.8px 73.9px,663.2px 73.7px,662.3px 73.7px,661.4px 74.1px,660.6px 74.8px)"><i style="top:8px;left:37px;width:43px;height:2px;background:linear-gradient(90deg,#0f0 0px,#0f0 43px)"></i>
<i style="top:10px;left:27px;width:81px;height:2px;background:linear-gradient(90deg,#0f0 0px,#0f0 81px)"></i>
<i style="top:12px;left:20px;width:109px;height:2px;background:linear-gradient(90deg,#0f0 0px,#0f0 109px)"></i>
<i style="top:14px;left:15px;width:134px;height:2px;background:linear-gradient(90deg,#0f0 0px,#0f0 115px,#24ff00 134px)"></i>
<i style="top:16px;left:12px;width:155px;height:2px;background:linear-gradient(90deg,#0f0 0px,#0f0 119px,#1fff00 135px,#50ff00 155px)"></i>
<i style="top:18px;left:10px;width:175px;height:2px;background:linear-gradient(90deg,#0f0 0px,#0f0 121px,#13ff00 132px,#3f0 146px,#5aff00 161px,#84ff00 175px)"></i>
<i style="top:20px;left:8px;width:194px;height:2px;background:linear-gradient(90deg,#00ff03 0px,#01ff00 124px,#20ff00 140px,#4cff00 158px,#81ff00 176px,#beff00 194px)"></i>
<i style="top:22px;left:6px;width:214px;height:2px;background:linear-gradient(90deg,#00ff05 0px,#0f0 51px,#0f0 126px,#26ff00 145px,#60ff00 167px,#a9ff00 190px,#feff00 212px,#fff800 214px)"></i>
<i style="top:24px;left:5px;width:232px;height:2px;background:linear-gradient(90deg,#00ff08 0px,#0f0 73px,#0f0 127px,#28ff00 147px,#65ff00 170px,#adff00 192px,#ff0 213px,#fd0 222px,#ffbe00 232px)"></i>
<i style="top:26px;left:4px;width:251px;height:2px;background:linear-gradient(90deg,#00ff0b 0px,#0f0 95px,#01ff00 129px,#2aff00 149px,#68ff00 172px,#adff00 193px,#ff0 214px,#ffe000 222px,#ffc300 231px,#ff9300 251px)"></i>
<i style="top:28px;left:3px;width:269px;height:2px;background:linear-gradient(90deg,#00ff0d 0px,#0f0 130px,#29ff00 150px,#65ff00 172px,#af0 193px,#fffe00 215px,#ffd500 226px,#ffaf00 239px,#ff9000 253px,#ff7500 269px)"></i>
<i style="top:30px;left:2px;width:287px;height:2px;background:linear-gradient(90deg,#00ff10 0px,#00ff01 131px,#27ff00 150px,#65ff00 173px,#adff00 195px,#fdff00 215px,#ffca00 230px,#ffa000 246px,#ff7c00 265px,#ff5f00 287px)"></i>
<i style="top:32px;left:2px;width:305px;height:2px;background:linear-gradient(90deg,#00ff13 0px,#01ff04 132px,#2bff01 152px,#67ff00 174px,#aeff00 195px,#fdff00 215px,#ffc300 232px,#ff9300 252px,#ff6b00 276px,#ff4c00 305px)"></i>
<i style="top:34px;left:1px;width:323px;height:2px;background:linear-gradient(90deg,#00ff16 0px,#00ff07 133px,#2aff05 153px,#67ff01 175px,#aeff00 196px,#feff00 216px,#ffdc00 225px,#ffbd00 235px,#ffa100 246px,#f80 258px,#ff5e00 287px,#ff3d00 323px)"></i>
<i style="top:36px;left:1px;width:341px;height:2px;background:linear-gradient(90deg,#00ff19 0px,#00ff0b 133px,#27ff08 152px,#67ff05 175px,#aeff01 196px,#ff0 216px,#ffd800 226px,#ffb600 237px,#ff9700 250px,#ff7d00 264px,#f60 280px,#ff5200 298px,#ff3100 341px)"></i>
<i style="top:38px;left:1px;width:358px;height:2px;background:linear-gradient(90deg,#00ff1c 0px,#01ff0f 134px,#29ff0c 153px,#67ff09 175px,#aeff05 196px,#fbff02 215px,#fffe02 216px,#ffcd00 229px,#ffae00 240px,#ff8e00 254px,#ff7500 269px,#ff5d00 287px,#ff4800 308px,#ff2700 358px)"></i>
<i style="top:40px;left:0px;width:376px;height:2px;background:linear-gradient(90deg,#00ff1f 0px,#00ff13 135px,#29ff10 154px,#67ff0d 176px,#afff0a 197px,#fcff06 216px,#ffcf03 229px,#ffaa01 242px,#ff8a00 257px,#ff6d00 275px,#ff5400 295px,#ff4000 318px,#ff2e00 345px,#ff1f00 376px)"></i>
<i style="top:42px;left:0px;width:394px;height:2px;background:linear-gradient(90deg,#0f2 0px,#00ff17 135px,#28ff14 154px,#6f1 176px,#afff0e 197px,#fdff0b 216px,#ffcf07 229px,#ffa704 243px,#ff8301 260px,#f60 279px,#ff4d00 302px,#ff3800 328px,#ff2600 359px,#ff1700 394px)"></i>
<i style="top:44px;left:0px;width:411px;height:2px;background:linear-gradient(90deg,#00ff25 0px,#01ff1b 136px,#2aff18 155px,#66ff16 176px,#afff13 197px,#feff10 216px,#ffca0b 230px,#ffa107 245px,#ff7d03 263px,#ff5f01 284px,#ff4700 308px,#ff3100 337px,#ff2000 371px,#f10 411px)"></i>
<i style="top:46px;left:0px;width:429px;height:2px;background:linear-gradient(90deg,#00ff29 0px,#00ff1f 136px,#2aff1d 155px,#66ff1a 176px,#afff18 197px,#ffff15 216px,#ffca0f 230px,#ff9e0a 246px,#ff7906 265px,#ff5a02 288px,#ff4000 315px,#ff2b00 347px,#ff1a00 385px,#ff0c00 429px)"></i>
<i style="top:48px;left:0px;width:446px;height:2px;background:linear-gradient(90deg,#00ff2c 0px,#00ff23 136px,#27ff22 154px,#66ff1f 176px,#acff1d 196px,#fffe1a 216px,#ffc913 230px,#ff9b0d 247px,#ff7408 268px,#ff5504 292px,#ff3b01 321px,#ff2600 356px,#ff1500 397px,#ff0800 446px)"></i>
<i style="top:50px;left:0px;width:463px;height:2px;background:linear-gradient(90deg,#00ff2f 0px,#01ff28 137px,#29ff26 155px,#66ff24 176px,#a8ff22 195px,#fffd20 216px,#ffe01b 223px,#ffc517 231px,#ff9610 249px,#ff700a 270px,#ff5006 296px,#ff3602 327px,#ff2100 365px,#ff1000 410px,#ff0400 463px)"></i>
<i style="top:52px;left:0px;width:481px;height:2px;background:linear-gradient(90deg,#0f3 0px,#00ff2c 137px,#28ff2b 155px,#65ff29 176px,#a8ff28 195px,#fffd25 216px,#ffdf20 223px,#ffc41c 231px,#ff9313 250px,#ff6b0d 273px,#ff4b07 300px,#ff3103 333px,#ff1d00 374px,#ff0c00 424px,#ff0100 481px)"></i>
<i style="top:54px;left:0px;width:498px;height:2px;background:linear-gradient(90deg,#00ff36 0px,#00ff31 137px,#28ff30 155px,#62ff2f 175px,#a5ff2d 194px,#feff2c 215px,#fffc2b 216px,#ffdb25 224px,#ffc020 232px,#ffa41a 242px,#ff8e16 252px,#ff660f 276px,#ff4609 305px,#ff2c04 341px,#ff1701 386px,#ff0700 446px,#f00 498px)"></i>
<i style="top:56px;left:0px;width:516px;height:2px;background:linear-gradient(90deg,#00ff39 0px,#01ff36 138px,#2aff35 156px,#65ff34 176px,#a5ff33 194px,#feff32 215px,#fffb31 216px,#ffda2a 224px,#ffbc24 233px,#ffa11e 243px,#ff8b19 253px,#ff6211 278px,#ff420a 309px,#ff2705 349px,#ff1301 399px,#ff0200 470px,#f00 516px)"></i>
<i style="top:58px;left:1px;width:532px;height:2px;background:linear-gradient(90deg,#00ff3d 0px,#00ff3a 137px,#29ff3a 155px,#68ff39 176px,#adff39 195px,#ffff38 214px,#ffdd30 222px,#ffbe29 231px,#ffa223 241px,#ff881d 253px,#ff5f13 279px,#ff3e0c 312px,#ff2306 356px,#ff0e01 411px,#f00 480px,#f00 532px)"></i>
<i style="top:60px;left:1px;width:549px;height:2px;background:linear-gradient(90deg,#00ff41 0px,#00ff3f 137px,#29ff3f 155px,#64ff3f 175px,#a9ff3f 194px,#fffe3e 214px,#ffd835 223px,#ffba2d 232px,#ff9f26 242px,#ff8520 254px,#ff5a15 282px,#ff3a0d 316px,#ff1f07 363px,#ff0b02 423px,#f00 479px,#f00 549px)"></i>
<i style="top:62px;left:1px;width:567px;height:2px;background:linear-gradient(90deg,#0f4 0px,#01ff45 138px,#2bff45 156px,#68ff45 176px,#aaff45 194px,#fffd44 214px,#ffd73a 223px,#ffb932 232px,#ff9c2a 243px,#ff8223 255px,#ff6b1d 269px,#ff5718 284px,#ff360f 320px,#ff1b07 371px,#ff0702 435px,#f00 478px,#f00 567px)"></i>
<i style="top:64px;left:1px;width:584px;height:2px;background:linear-gradient(90deg,#00ff48 0px,#01ff4a 138px,#28ff4a 155px,#64ff4b 175px,#a6ff4b 193px,#fdff4c 213px,#fffc4b 214px,#ffd640 223px,#ffb536 233px,#ff982e 244px,#ff7f27 256px,#ff6920 270px,#ff541a 286px,#ff3310 324px,#ff1808 377px,#ff0503 446px,#ff0001 476px,#f00 584px)"></i>
<i style="top:66px;left:2px;width:601px;height:2px;background:linear-gradient(90deg,#00ff4c 0px,#00ff4f 137px,#27ff50 154px,#64ff50 174px,#a2ff51 191px,#feff52 212px,#fffb51 213px,#ffd545 222px,#ffb43b 232px,#ff9732 243px,#ff7d2a 256px,#ff6522 271px,#ff511c 287px,#ff3012 326px,#ff1509 382px,#ff0303 453px,#ff0002 473px,#f00 601px)"></i>
<i style="top:68px;left:2px;width:618px;height:2px;background:linear-gradient(90deg,#00ff4f 0px,#01ff54 138px,#29ff55 155px,#67ff57 175px,#aeff58 194px,#ffff59 212px,#ffd84c 221px,#ffb641 231px,#ff9637 243px,#ff7c2e 256px,#ff6426 271px,#ff4f1f 288px,#ff2e13 329px,#ff130a 386px,#ff0204 459px,#f00 618px)"></i>
<i style="top:70px;left:2px;width:635px;height:2px;background:linear-gradient(90deg,#00ff53 0px,#01ff5a 138px,#29ff5b 155px,#67ff5d 175px,#aaff5f 193px,#fffe60 212px,#ffd752 221px,#ffb245 232px,#ff933a 244px,#ff7931 257px,#ff6229 272px,#ff4d21 290px,#ff2b15 332px,#ff120b 390px,#ff0105 463px,#f00 635px)"></i>
<i style="top:72px;left:3px;width:636px;height:2px;background:linear-gradient(90deg,#00ff57 0px,#00ff60 137px,#28ff61 154px,#66ff63 174px,#abff65 192px,#fffd67 211px,#ffd658 220px,#ffb14a 231px,#ff923f 243px,#ff7835 256px,#ff612c 271px,#ff4c24 289px,#ff2b17 331px,#ff110d 389px,#ff0106 461px,#f00 636px)"></i>
<i style="top:74px;left:3px;width:636px;height:2px;background:linear-gradient(90deg,#00ff5b 0px,#00ff65 137px,#25ff67 153px,#63ff6a 173px,#a7ff6c 191px,#fdff6f 210px,#fffc6e 211px,#ffd55f 220px,#ffb050 231px,#ff9143 243px,#ff7739 256px,#ff602f 271px,#ff4b27 289px,#ff2a19 331px,#ff110f 388px,#ff0007 460px,#f00 636px)"></i>
<i style="top:76px;left:3px;width:636px;height:2px;background:linear-gradient(90deg,#00ff5f 0px,#01ff6b 138px,#27ff6d 154px,#63ff70 173px,#a3ff73 190px,#feff77 210px,#fffb75 211px,#ffd465 220px,#ffaf55 231px,#ff9048 243px,#ff773d 256px,#ff6033 271px,#ff4a2a 289px,#ff2a1c 331px,#ff1110 387px,#ff0009 458px,#f00 636px)"></i>
<i style="top:78px;left:4px;width:635px;height:2px;background:linear-gradient(90deg,#00ff63 0px,#00ff71 137px,#29ff74 154px,#6f7 173px,#abff7b 191px,#ffff7f 209px,#ffd76d 218px,#ffb15c 229px,#ff924e 241px,#ff7742 254px,#ff6037 269px,#ff4b2d 287px,#ff2a1e 329px,#ff1112 385px,#ff000a 456px,#f00 635px)"></i>
<i style="top:80px;left:4px;width:635px;height:2px;background:linear-gradient(90deg,#00ff67 0px,#0f7 137px,#26ff7a 153px,#66ff7e 173px,#acff82 191px,#fffe86 209px,#ffd673 218px,#ffb061 229px,#ff9152 241px,#ff7746 254px,#ff5f3b 269px,#ff4b31 286px,#ff2a21 328px,#ff1114 384px,#ff000b 454px,#ff0001 635px)"></i>
<i style="top:82px;left:5px;width:634px;height:2px;background:linear-gradient(90deg,#00ff6c 0px,#01ff7e 137px,#28ff81 153px,#65ff85 172px,#a8ff89 189px,#fffd8e 208px,#ffd57a 217px,#ffaf67 228px,#ff9057 240px,#ff764a 253px,#ff5e3e 268px,#ff4a34 285px,#ff2923 327px,#ff1016 383px,#ff000d 452px,#ff0002 634px)"></i>
<i style="top:84px;left:5px;width:634px;height:2px;background:linear-gradient(90deg,#00ff70 0px,#00ff84 137px,#28ff87 153px,#65ff8c 172px,#a8ff91 189px,#fffc96 208px,#ffd481 217px,#ffae6d 228px,#ff8f5c 240px,#ff754e 253px,#ff5e42 268px,#ff4937 285px,#ff2825 327px,#ff1018 382px,#ff000e 450px,#ff0002 634px)"></i>
<i style="top:86px;left:6px;width:633px;height:2px;background:linear-gradient(90deg,#00ff74 0px,#00ff8a 136px,#24ff8e 151px,#61ff93 170px,#a4ff99 187px,#fdff9f 206px,#fffb9e 207px,#ffd387 216px,#ffad72 227px,#ff8e61 239px,#ff7453 252px,#ff5d46 267px,#ff493a 284px,#ff2828 326px,#ff1019 381px,#ff000f 448px,#ff0003 633px)"></i>
<i style="top:88px;left:6px;width:633px;height:2px;background:linear-gradient(90deg,#00ff79 0px,#01ff91 137px,#29ff95 153px,#65ff9b 171px,#a4ffa0 187px,#feffa8 206px,#fffaa5 207px,#ffd28e 216px,#ffaf7a 226px,#ff8f67 238px,#ff7558 251px,#ff5d4a 266px,#ff483e 284px,#ff272a 326px,#ff0f1b 380px,#f01 446px,#ff0004 633px)"></i>
<i style="top:90px;left:7px;width:632px;height:2px;background:linear-gradient(90deg,#00ff7d 0px,#00ff98 136px,#29ff9c 152px,#68ffa3 171px,#adffa9 188px,#ffffb1 205px,#ffd598 214px,#ffb182 224px,#ff916e 236px,#ff765e 249px,#ff5e4f 264px,#ff4942 281px,#ff282d 323px,#ff101e 377px,#ff0013 443px,#ff0004 632px)"></i>
<i style="top:92px;left:7px;width:632px;height:2px;background:linear-gradient(90deg,#00ff82 0px,#00ff8f 74px,#00ff9e 136px,#25ffa3 151px,#64ffaa 170px,#a9ffb1 187px,#fffeb9 205px,#ffd49f 214px,#ffb088 224px,#ff9073 236px,#ff7562 249px,#ff5d53 264px,#ff4846 281px,#ff2730 323px,#ff0f20 376px,#ff0014 441px,#ff0005 632px)"></i>
<i style="top:94px;left:8px;width:631px;height:2px;background:linear-gradient(90deg,#00ff86 0px,#00ff94 74px,#01ffa6 136px,#2affab 152px,#67ffb2 170px,#a9ffba 186px,#fffdc1 204px,#ffd3a6 213px,#ffaf8e 223px,#ff8f79 235px,#ff7467 248px,#ff5c57 263px,#ff4749 280px,#ff2632 322px,#ff0f22 374px,#ff0016 438px,#ff0006 631px)"></i>
<i style="top:96px;left:8px;width:631px;height:2px;background:linear-gradient(90deg,#00ff8b 0px,#00ff9a 74px,#00ffad 136px,#27ffb2 151px,#63ffba 169px,#a5ffc2 185px,#fdffcc 203px,#fffcca 204px,#ffd2ad 213px,#ffae95 223px,#ff8e7e 235px,#ff736b 248px,#ff5b5b 263px,#ff474c 280px,#ff2635 322px,#ff0f24 374px,#ff0017 437px,#ff0006 631px)"></i>
<i style="top:98px;left:9px;width:630px;height:2px;background:linear-gradient(90deg,#00ff90 0px,#00ffa0 74px,#00ffb4 135px,#26ffba 150px,#63ffc2 168px,#a1ffca 183px,#feffd6 202px,#fffbd3 203px,#ffd1b5 212px,#ffad9b 222px,#ff8d83 234px,#ff7270 247px,#ff5a5f 262px,#ff4650 279px,#ff2537 321px,#ff0f26 372px,#ff0019 434px,#ff000f 519px,#ff0007 630px)"></i>
<i style="top:100px;left:9px;width:630px;height:2px;background:linear-gradient(90deg,#00ff94 0px,#00ffa6 75px,#01ffbb 136px,#29ffc2 151px,#67ffcb 169px,#aeffd5 186px,#ffffdf 202px,#ffd4bf 211px,#ffafa4 221px,#ff908d 232px,#ff7477 245px,#ff5c65 260px,#ff4755 277px,#ff263b 319px,#ff0f28 370px,#ff001b 432px,#ff0010 518px,#ff0008 630px)"></i>
<i style="top:102px;left:10px;width:629px;height:2px;background:linear-gradient(90deg,#0f9 0px,#00ffac 74px,#00ffc3 135px,#28ffca 150px,#66ffd4 168px,#aaffde 184px,#fffee9 201px,#ffd3c7 210px,#ffaeaa 220px,#ff8f92 231px,#ff747c 244px,#ff5b69 259px,#ff4658 276px,#ff253d 318px,#ff0f2a 368px,#ff001d 429px,#f01 516px,#ff0009 629px)"></i>
<i style="top:104px;left:11px;width:628px;height:2px;background:linear-gradient(90deg,#00ff9e 0px,#00ffb2 73px,#00ffca 134px,#27ffd2 149px,#62ffdc 166px,#a6ffe6 182px,#fffdf2 200px,#ffd2cf 209px,#ffadb1 219px,#ff8e98 230px,#ff7381 243px,#ff5a6d 258px,#ff465c 275px,#ff2440 317px,#ff0e2d 366px,#ff001e 426px,#ff0012 513px,#ff0009 628px)"></i>
<i style="top:106px;left:11px;width:627px;height:2px;background:linear-gradient(90deg,#00ffa3 0px,#00ffb9 74px,#01ffd2 135px,#2affdb 150px,#66ffe5 167px,#a6fff0 182px,#fdfffd 199px,#fffcfb 200px,#ffd1d7 209px,#ffacb8 219px,#ff8d9e 230px,#ff7286 243px,#ff5971 258px,#ff4560 275px,#ff2443 316px,#ff0e2f 365px,#ff0020 424px,#ff0014 512px,#ff000a 627px)"></i>
<i style="top:108px;left:12px;width:624px;height:2px;background:linear-gradient(90deg,#00ffa9 0px,#00ffbf 74px,#00ffda 134px,#23ffe2 147px,#5affec 163px,#8ffff6 176px,#c8ffff 188px,#fef5ff 200px,#fff0fb 201px,#ffc7d8 210px,#ffa5b9 220px,#ff879f 231px,#ff6d88 244px,#ff5673 259px,#ff4261 276px,#f24 318px,#ff0d31 365px,#f02 421px,#ff0015 508px,#ff000b 624px)"></i>
<i style="top:110px;left:13px;width:621px;height:2px;background:linear-gradient(90deg,#00ffae 0px,#00ffc6 73px,#00ffe2 133px,#1fffea 145px,#4efff3 159px,#8fffff 175px,#fee9ff 201px,#ffe5fb 202px,#ffbfd9 211px,#ff9ebb 221px,#ff809f 233px,#ff6788 246px,#ff5174 261px,#ff3e62 278px,#ff2046 319px,#ff0d32 365px,#ff0024 418px,#ff0016 505px,#ff000c 621px)"></i>
<i style="top:112px;left:13px;width:619px;height:2px;background:linear-gradient(90deg,#00ffb3 0px,#0fc 74px,#01ffeb 134px,#25fff4 147px,#5dffff 163px,#aaefff 183px,#fedeff 203px,#ffdafb 204px,#ffb6d9 213px,#ff97bc 223px,#ff7aa1 235px,#ff638a 248px,#ff4e76 263px,#ff3b64 280px,#ff1e47 322px,#ff0c34 366px,#ff0026 416px,#ff0018 503px,#ff000d 619px)"></i>
<i style="top:114px;left:14px;width:616px;height:2px;background:linear-gradient(90deg,#00ffb9 0px,#00ffd3 73px,#00fff3 133px,#31ffff 150px,#5df5ff 163px,#a8e5ff 183px,#fed4ff 204px,#ffd0fc 205px,#ffaeda 214px,#ff91bd 224px,#ff75a2 236px,#ff5e8c 249px,#ff4a77 264px,#ff3966 281px,#ff1c48 323px,#ff0b36 366px,#ff0028 414px,#ff0019 501px,#ff000e 616px)"></i>
<i style="top:116px;left:14px;width:614px;height:2px;background:linear-gradient(90deg,#00ffbe 0px,#00ffda 73px,#00fffc 133px,#23f9ff 146px,#5debff 164px,#aadbff 185px,#fecaff 206px,#ffc7fc 207px,#ffa7db 216px,#ff88bc 227px,#ff6ea2 239px,#ff598c 252px,#ff3566 284px,#ff1a49 326px,#ff0a37 367px,#ff002a 412px,#ff001a 499px,#ff000f 614px)"></i>
<i style="top:118px;left:15px;width:612px;height:2px;background:linear-gradient(90deg,#00ffc3 0px,#00ffde 68px,#0ff 124px,#01f9ff 133px,#27efff 147px,#60e2ff 165px,#abd2ff 186px,#fec1ff 207px,#ffbefc 208px,#ff9fdc 217px,#ff82bd 228px,#ff6aa3 240px,#ff558d 253px,#ff3368 285px,#ff194b 327px,#ff0a39 366px,#ff002c 409px,#ff001c 496px,#ff0010 612px)"></i>
<i style="top:120px;left:16px;width:609px;height:2px;background:linear-gradient(90deg,#00ffc9 0px,#00ffe2 60px,#0ff 111px,#01f1ff 132px,#25e7ff 146px,#5ddaff 164px,#a9c9ff 186px,#feb8ff 208px,#ffb5fc 209px,#ff98dc 218px,#ff7fc1 228px,#ff69a8 239px,#ff5492 252px,#ff346d 282px,#ff1a50 321px,#ff0a3d 361px,#ff002f 406px,#ff001d 493px,#f01 609px)"></i>
<i style="top:122px;left:17px;width:606px;height:2px;background:linear-gradient(90deg,#00ffcf 0px,#00ffe5 53px,#0ff 98px,#00e9ff 131px,#23e0ff 145px,#5dd2ff 164px,#a8c2ff 186px,#feb0ff 209px,#ffadfc 210px,#ff92dd 219px,#ff79c2 229px,#ff64aa 240px,#ff5193 253px,#ff316f 283px,#ff1951 322px,#ff0a3f 360px,#ff0031 403px,#ff001f 490px,#ff0012 606px)"></i>
<i style="top:124px;left:17px;width:604px;height:2px;background:linear-gradient(90deg,#00ffd5 0px,#00ffe9 46px,#0ff 86px,#01e1ff 132px,#27d7ff 147px,#60c9ff 166px,#a9b9ff 188px,#fea8ff 211px,#ffa5fc 212px,#ff8bde 221px,#ff72c0 232px,#ff5ea9 243px,#ff4c93 256px,#ff2e6f 286px,#ff1753 324px,#ff0a42 359px,#f03 401px,#ff0020 488px,#ff0013 604px)"></i>
<i style="top:126px;left:18px;width:601px;height:2px;background:linear-gradient(90deg,#00ffdb 0px,#0ff 73px,#01daff 131px,#25d0ff 146px,#5fc2ff 166px,#abb1ff 189px,#fea0ff 212px,#ff9efc 213px,#ff85de 222px,#ff6dc1 233px,#ff5aaa 244px,#ff4895 257px,#ff2c71 287px,#ff1654 325px,#ff0944 358px,#ff0035 398px,#f02 485px,#ff0014 601px)"></i>
<i style="top:128px;left:19px;width:598px;height:2px;background:linear-gradient(90deg,#00ffe1 0px,#0ff 61px,#00d4ff 130px,#23caff 145px,#5fbbff 166px,#9caeff 185px,#fe99ff 213px,#ff97fc 214px,#ff7fdf 223px,#ff68c2 234px,#ff4596 258px,#ff2a72 288px,#ff1556 325px,#ff0946 357px,#ff0038 395px,#ff0024 482px,#ff0015 598px)"></i>
<i style="top:130px;left:19px;width:596px;height:2px;background:linear-gradient(90deg,#00ffe7 0px,#0ff 49px,#01ccff 131px,#24c3ff 146px,#5fb4ff 167px,#9ea6ff 187px,#fe92ff 215px,#ff90fc 216px,#ff79e0 225px,#ff64c3 236px,#ff4297 260px,#ff2774 290px,#ff1358 327px,#ff013c 388px,#ff002f 432px,#ff0021 505px,#ff0016 596px)"></i>
<i style="top:132px;left:20px;width:593px;height:2px;background:linear-gradient(90deg,#00ffed 0px,#0ff 36px,#01c6ff 130px,#25bcff 146px,#5faeff 167px,#9f9fff 188px,#ff89fc 217px,#ff74e0 226px,#ff5fc4 237px,#ff3f99 261px,#ff2575 291px,#ff1259 328px,#ff003e 387px,#ff0030 432px,#f02 504px,#ff0017 593px)"></i>
<i style="top:134px;left:21px;width:590px;height:2px;background:linear-gradient(90deg,#00fff4 0px,#0ff 23px,#00c0ff 129px,#24b6ff 145px,#5fa8ff 167px,#9e99ff 188px,#ff83fd 218px,#ff6fe1 227px,#ff5bc5 238px,#ff3c9a 262px,#ff2377 292px,#ff105a 329px,#ff0040 386px,#ff0032 432px,#ff0024 502px,#ff0018 590px)"></i>
<i style="top:136px;left:22px;width:587px;height:2px;background:linear-gradient(90deg,#00fffa 0px,#00fbff 17px,#01baff 129px,#27afff 146px,#61a1ff 168px,#a093ff 189px,#ff7dfd 219px,#ff6ae1 228px,#ff57c6 239px,#ff399b 263px,#ff2178 293px,#ff0f5c 330px,#ff0042 383px,#f03 431px,#ff0025 501px,#ff001a 587px)"></i>
<i style="top:138px;left:22px;width:585px;height:2px;background:linear-gradient(90deg,#00feff 0px,#01b5ff 129px,#25aaff 146px,#5f9cff 168px,#9e8dff 190px,#ff77fd 221px,#ff65e2 230px,#ff53c7 241px,#ff369c 265px,#ff1f79 295px,#ff0e5e 331px,#f04 382px,#ff0035 431px,#ff0026 500px,#ff001b 585px)"></i>
<i style="top:140px;left:23px;width:582px;height:2px;background:linear-gradient(90deg,#00f7ff 0px,#00b0ff 128px,#24a5ff 145px,#5e97ff 168px,#a088ff 191px,#ff72fd 222px,#ff5ee0 232px,#ff4fc8 242px,#ff349d 266px,#ff1d7a 296px,#ff0d5f 332px,#ff0047 379px,#ff0036 431px,#ff0027 499px,#ff001c 582px)"></i>
<i style="top:142px;left:24px;width:579px;height:2px;background:linear-gradient(90deg,#00f1ff 0px,#01aaff 128px,#279fff 146px,#6191ff 169px,#a182ff 192px,#ff6cfd 223px,#ff5ae0 233px,#ff4bc9 243px,#ff319f 267px,#ff1c7c 297px,#ff0b60 333px,#ff004a 376px,#ff0037 431px,#ff0029 497px,#ff001d 579px)"></i>
<i style="top:144px;left:25px;width:576px;height:2px;background:linear-gradient(90deg,#00ebff 0px,#01a5ff 127px,#259aff 145px,#618cff 169px,#a07dff 192px,#ff67fd 224px,#ff56e1 234px,#ff47c9 244px,#ff2ea0 268px,#ff1a7e 297px,#ff0a62 333px,#ff004d 373px,#ff0039 430px,#ff002a 496px,#ff001e 576px)"></i>
<i style="top:146px;left:26px;width:573px;height:2px;background:linear-gradient(90deg,#00e5ff 0px,#00a1ff 126px,#2496ff 144px,#5e87ff 168px,#9f78ff 192px,#ff62fd 225px,#ff44ca 245px,#ff2ca1 269px,#ff197f 298px,#ff0963 334px,#ff0050 370px,#ff003a 430px,#ff002c 494px,#ff001f 573px)"></i>
<i style="top:148px;left:26px;width:571px;height:2px;background:linear-gradient(90deg,#00dfff 0px,#019cff 127px,#2591ff 145px,#6082ff 170px,#a073ff 194px,#ff5efd 227px,#ff41cb 247px,#ff29a2 271px,#ff1780 300px,#ff0864 336px,#ff0053 368px,#ff003c 431px,#ff002d 494px,#ff0021 571px)"></i>
<i style="top:150px;left:27px;width:568px;height:2px;background:linear-gradient(90deg,#00daff 0px,#0197ff 126px,#268cff 145px,#607eff 170px,#a26eff 195px,#ff59fd 228px,#ff3dcc 248px,#ff27a3 272px,#ff1582 301px,#ff0766 336px,#f05 366px,#ff003d 430px,#ff002e 492px,#f02 568px)"></i>
<i style="top:152px;left:28px;width:566px;height:2px;background:linear-gradient(90deg,#00d4ff 0px,#0093ff 125px,#2488ff 144px,#6079ff 170px,#a06aff 195px,#ff55fd 229px,#ff3acc 249px,#ff25a4 273px,#ff1383 302px,#ff0667 337px,#ff0058 363px,#ff003e 430px,#ff002f 491px,#ff0023 566px)"></i>
<i style="top:154px;left:29px;width:563px;height:2px;background:linear-gradient(90deg,#00cfff 0px,#018fff 125px,#2783ff 145px,#6274ff 171px,#a266ff 196px,#ff50fd 230px,#ff37cd 250px,#ff22a5 274px,#ff1284 303px,#ff0568 338px,#ff0052 380px,#ff0040 430px,#ff0031 490px,#ff0024 563px)"></i>
<i style="top:156px;left:30px;width:560px;height:2px;background:linear-gradient(90deg,#00caff 0px,#018bff 124px,#2680ff 144px,#6071ff 170px,#a162ff 196px,#ff4cfd 231px,#ff34ce 251px,#ff20a6 275px,#ff1085 304px,#ff046a 338px,#ff0054 379px,#ff0041 429px,#ff0032 488px,#ff0026 560px)"></i>
<i style="top:158px;left:30px;width:558px;height:2px;background:linear-gradient(90deg,#00c6ff 0px,#0087ff 124px,#247cff 144px,#606dff 171px,#a25eff 198px,#ff48fd 233px,#ff31ce 253px,#ff1ea7 277px,#ff0f86 306px,#ff036b 340px,#f05 381px,#ff0043 429px,#f03 488px,#ff0027 558px)"></i>
<i style="top:160px;left:31px;width:555px;height:2px;background:linear-gradient(90deg,#00c1ff 0px,#0183ff 124px,#2778ff 145px,#6269ff 172px,#a359ff 199px,#ff45fd 234px,#ff2ecf 254px,#ff1ca8 278px,#ff0e88 306px,#ff036d 340px,#ff0057 380px,#f04 428px,#ff0035 486px,#ff0028 555px)"></i>
<i style="top:162px;left:32px;width:552px;height:2px;background:linear-gradient(90deg,#00bcff 0px,#0180ff 123px,#2674ff 144px,#6265ff 172px,#a555ff 200px,#ff41fd 235px,#ff2cd0 255px,#ff1aa9 279px,#ff0c89 307px,#ff026f 340px,#ff0058 380px,#ff0046 427px,#ff0037 484px,#ff002a 552px)"></i>
<i style="top:164px;left:33px;width:549px;height:2px;background:linear-gradient(90deg,#00b8ff 0px,#007cff 122px,#2571ff 143px,#5f62ff 171px,#a352ff 200px,#ff3dfd 236px,#ff29d0 256px,#ff18aa 280px,#ff0b8a 308px,#ff0170 341px,#ff005a 380px,#ff0047 427px,#ff0038 483px,#ff002b 549px)"></i>
<i style="top:166px;left:34px;width:546px;height:2px;background:linear-gradient(90deg,#00b3ff 0px,#0178ff 122px,#256eff 143px,#615eff 172px,#a54eff 201px,#ff3afd 237px,#ff27d1 257px,#ff17ac 280px,#ff0a8c 308px,#ff0072 341px,#ff005b 380px,#ff0049 426px,#ff0039 481px,#ff002d 546px)"></i>
<i style="top:168px;left:35px;width:543px;height:2px;background:linear-gradient(90deg,#00afff 0px,#0175ff 121px,#266aff 143px,#615bff 172px,#a44bff 201px,#ff37fd 238px,#ff24d1 258px,#ff15ac 282px,#ff088c 310px,#ff0073 342px,#ff005d 380px,#ff004a 426px,#ff002e 543px)"></i>
<i style="top:170px;left:35px;width:541px;height:2px;background:linear-gradient(90deg,#00abff 0px,#0072ff 121px,#2567ff 143px,#6158ff 173px,#a548ff 203px,#ff34fe 240px,#ff22d2 260px,#ff13ae 283px,#ff078e 311px,#ff0074 343px,#ff005e 381px,#ff004c 426px,#ff002f 541px)"></i>
<i style="top:172px;left:36px;width:538px;height:2px;background:linear-gradient(90deg,#00a7ff 0px,#016fff 121px,#2763ff 144px,#6354ff 174px,#a644ff 204px,#ff31fe 241px,#ff1fd2 261px,#ff12af 284px,#ff0690 311px,#ff0076 343px,#ff0060 381px,#ff004d 425px,#ff0031 538px)"></i>
<i style="top:174px;left:37px;width:535px;height:2px;background:linear-gradient(90deg,#00a3ff 0px,#016cff 120px,#2661ff 143px,#6152ff 173px,#a542ff 204px,#ff2efe 242px,#ff1dd3 262px,#ff10af 285px,#ff0591 312px,#ff0078 343px,#ff0062 380px,#ff004f 424px,#ff0032 535px)"></i>
<i style="top:176px;left:38px;width:532px;height:2px;background:linear-gradient(90deg,#00a0ff 0px,#0069ff 119px,#255eff 142px,#614fff 173px,#a43fff 204px,#ff2bfe 243px,#ff1bd4 263px,#ff0eb0 286px,#ff0492 313px,#ff0079 344px,#ff0063 380px,#ff0051 423px,#ff0034 532px)"></i>
<i style="top:178px;left:39px;width:529px;height:2px;background:linear-gradient(90deg,#009cff 0px,#0166ff 119px,#275bff 143px,#634bff 174px,#a53cff 205px,#ff28fe 244px,#ff19d6 263px,#ff0db2 286px,#ff0394 313px,#ff007a 344px,#ff0065 380px,#ff0052 422px,#ff0035 529px)"></i>
<i style="top:180px;left:40px;width:526px;height:2px;background:linear-gradient(90deg,#0098ff 0px,#0164ff 118px,#2658ff 142px,#6349ff 174px,#a639ff 206px,#ff25fe 245px,#ff17d6 264px,#ff0cb3 287px,#ff0296 313px,#ff007c 344px,#f06 380px,#ff0054 421px,#ff0037 526px)"></i>
<i style="top:182px;left:41px;width:523px;height:2px;background:linear-gradient(90deg,#0095ff 0px,#0061ff 117px,#2556ff 141px,#6047ff 173px,#a537ff 206px,#ff23fe 246px,#ff15d7 265px,#ff0ab4 288px,#ff0091 320px,#ff007e 344px,#ff0068 379px,#ff0056 420px,#ff0038 523px)"></i>
<i style="top:184px;left:42px;width:520px;height:2px;background:linear-gradient(90deg,#0091ff 0px,#015eff 117px,#2653ff 141px,#6244ff 174px,#a634ff 207px,#ff20fe 247px,#ff13d7 266px,#ff09b5 289px,#ff0096 317px,#ff007f 345px,#ff0069 380px,#ff0057 420px,#ff003a 520px)"></i>
<i style="top:186px;left:42px;width:519px;height:2px;background:linear-gradient(90deg,#008eff 0px,#015cff 117px,#2650ff 142px,#6241ff 175px,#a731ff 209px,#ff1efe 249px,#ff11d6 269px,#ff07b5 291px,#ff009a 315px,#ff0080 346px,#ff006b 380px,#ff0059 420px,#ff003b 519px)"></i>
<i style="top:188px;left:43px;width:516px;height:2px;background:linear-gradient(90deg,#008bff 0px,#005aff 116px,#254eff 141px,#623fff 175px,#a62fff 209px,#ff1bfe 250px,#ff10d8 269px,#ff06b7 291px,#ff009a 317px,#ff0082 346px,#ff006c 380px,#ff005a 419px,#ff003d 516px)"></i>
<i style="top:190px;left:44px;width:513px;height:2px;background:linear-gradient(90deg,#08f 0px,#0157ff 116px,#264cff 141px,#623cff 175px,#a72cff 210px,#ff19fe 251px,#ff0ed9 270px,#ff05b8 292px,#ff009c 317px,#ff0083 346px,#ff006e 379px,#ff005c 418px,#ff003f 513px)"></i>
<i style="top:192px;left:45px;width:510px;height:2px;background:linear-gradient(90deg,#0085ff 0px,#0155ff 115px,#2649ff 141px,#623aff 175px,#a62aff 210px,#ff17fe 252px,#ff0cd9 271px,#ff04b9 293px,#ff009d 318px,#ff0085 346px,#ff0070 379px,#ff005e 417px,#ff0040 510px)"></i>
<i style="top:194px;left:46px;width:507px;height:2px;background:linear-gradient(90deg,#0082ff 0px,#0053ff 114px,#2547ff 140px,#6238ff 175px,#a728ff 211px,#ff15fe 253px,#ff0bd9 272px,#ff02b9 294px,#ff009d 319px,#ff0086 347px,#ff0071 379px,#ff005f 416px,#ff0042 507px)"></i>
<i style="top:196px;left:47px;width:504px;height:2px;background:linear-gradient(90deg,#007fff 0px,#0150ff 114px,#2744ff 141px,#6335ff 176px,#a825ff 212px,#ff13fe 254px,#ff09da 273px,#ff02bb 294px,#ff009f 319px,#ff0087 347px,#ff0073 379px,#ff0061 415px,#f04 504px)"></i>
<i style="top:198px;left:48px;width:501px;height:2px;background:linear-gradient(90deg,#007cff 0px,#014eff 113px,#2643ff 140px,#6333ff 176px,#a723ff 212px,#ff11fe 255px,#ff08da 274px,#ff01bc 295px,#ff00a1 319px,#ff0089 347px,#ff0075 378px,#ff0063 414px,#ff0046 501px)"></i>
<i style="top:200px;left:49px;width:498px;height:2px;background:linear-gradient(90deg,#0079ff 0px,#004cff 112px,#2541ff 139px,#6132ff 175px,#a622ff 212px,#ff0ffe 256px,#ff06db 275px,#ff00bc 296px,#ff00a2 320px,#ff008b 347px,#ff0076 378px,#ff0064 413px,#ff0047 498px)"></i>
<i style="top:202px;left:50px;width:495px;height:2px;background:linear-gradient(90deg,#0076ff 0px,#014aff 112px,#263fff 139px,#632fff 176px,#a71fff 213px,#ff0dfe 257px,#ff05dd 275px,#ff00be 296px,#ff00a3 320px,#ff008c 347px,#f06 412px,#ff0049 495px)"></i>
<i style="top:204px;left:51px;width:492px;height:2px;background:linear-gradient(90deg,#0074ff 0px,#0148ff 111px,#263dff 139px,#632dff 176px,#a81dff 214px,#ff0bfe 258px,#ff04dd 276px,#ff00bf 297px,#ff00a5 320px,#ff008e 347px,#ff0068 411px,#ff004b 492px)"></i>
<i style="top:206px;left:52px;width:489px;height:2px;background:linear-gradient(90deg,#0071ff 0px,#0146ff 111px,#273bff 139px,#642bff 177px,#a91bff 215px,#ff0afe 259px,#ff02dd 277px,#ff00bf 298px,#ff00a6 321px,#ff008f 347px,#ff006a 409px,#ff004d 489px)"></i>
<i style="top:208px;left:53px;width:486px;height:2px;background:linear-gradient(90deg,#006eff 0px,#0144ff 110px,#2639ff 138px,#622aff 176px,#a81aff 215px,#ff08fe 260px,#ff01de 278px,#ff00c1 298px,#ff00a8 321px,#ff0091 347px,#ff006c 408px,#ff004f 486px)"></i>
<i style="top:210px;left:54px;width:483px;height:2px;background:linear-gradient(90deg,#006cff 0px,#0142ff 109px,#2737ff 138px,#6228ff 176px,#a918ff 216px,#ff06fe 261px,#ff00de 279px,#ff00c2 299px,#ff00a8 322px,#ff0092 347px,#ff006d 407px,#ff0051 483px)"></i>
<i style="top:212px;left:55px;width:480px;height:2px;background:linear-gradient(90deg,#006aff 0px,#0140ff 109px,#2735ff 138px,#6426ff 177px,#aa16ff 217px,#ff05fe 262px,#ff00e0 279px,#ff00c4 299px,#ff00ab 321px,#ff0095 346px,#ff0070 405px,#ff0053 480px)"></i>
<i style="top:214px;left:56px;width:477px;height:2px;background:linear-gradient(90deg,#0067ff 0px,#013fff 108px,#2833ff 138px,#6424ff 177px,#a914ff 217px,#ff03fe 263px,#ff00e0 280px,#ff00c4 300px,#ff00ac 322px,#ff0096 346px,#ff0072 404px,#f05 477px)"></i>
<i style="top:216px;left:57px;width:474px;height:2px;background:linear-gradient(90deg,#0065ff 0px,#023dff 108px,#2831ff 138px,#6522ff 178px,#aa13ff 218px,#ff02fe 264px,#ff00e1 281px,#ff00c5 301px,#ff0098 346px,#ff0073 403px,#ff0057 474px)"></i>
<i style="top:218px;left:58px;width:471px;height:2px;background:linear-gradient(90deg,#0062ff 0px,#013bff 107px,#2730ff 137px,#6321ff 177px,#a911ff 218px,#ff01fe 265px,#ff00e1 282px,#ff00c6 301px,#f09 346px,#ff0075 402px,#ff0059 471px)"></i>
<i style="top:220px;left:59px;width:469px;height:2px;background:linear-gradient(90deg,#0060ff 0px,#013aff 106px,#262fff 136px,#631fff 177px,#aa10ff 219px,#ff00fe 266px,#ff00e1 283px,#ff00c7 302px,#ff009b 346px,#f07 401px,#ff005a 469px)"></i>
<i style="top:222px;left:60px;width:466px;height:2px;background:linear-gradient(90deg,#005eff 0px,#0238ff 106px,#282dff 137px,#651dff 178px,#aa0eff 220px,#ff00fe 267px,#ff00e1 284px,#ff00c9 302px,#ff009c 346px,#ff0079 400px,#ff005c 466px)"></i>
<i style="top:224px;left:61px;width:463px;height:2px;background:linear-gradient(90deg,#005cff 0px,#0137ff 105px,#272bff 136px,#651cff 178px,#a90dff 220px,#ff00fe 268px,#ff00e2 285px,#ff00c9 303px,#ff009e 346px,#ff007a 399px,#ff005e 463px)"></i>
<i style="top:226px;left:62px;width:460px;height:2px;background:linear-gradient(90deg,#005aff 0px,#0235ff 105px,#2929ff 137px,#651aff 178px,#df01ff 251px,#ff00fe 269px,#ff00e2 286px,#ff00c9 304px,#ff009f 346px,#ff007d 397px,#ff0061 460px)"></i>
<i style="top:228px;left:63px;width:457px;height:2px;background:linear-gradient(90deg,#0058ff 0px,#0233ff 104px,#2828ff 136px,#6419ff 178px,#db01ff 250px,#ff00fe 270px,#ff00e4 286px,#ff00cb 304px,#ff00a1 346px,#ff007f 396px,#ff0063 457px)"></i>
<i style="top:230px;left:64px;width:454px;height:2px;background:linear-gradient(90deg,#0056ff 0px,#0232ff 104px,#2a26ff 137px,#6617ff 179px,#d701ff 248px,#ff00fe 271px,#f0c 305px,#ff00a3 345px,#ff0081 394px,#ff0065 454px)"></i>
<i style="top:232px;left:66px;width:450px;height:2px;background:linear-gradient(90deg,#0053ff 0px,#0230ff 102px,#2925ff 135px,#6616ff 178px,#d200ff 245px,#ff00fe 271px,#ff00cd 304px,#ff00a4 344px,#ff0083 392px,#ff0067 450px)"></i>
<i style="top:234px;left:67px;width:447px;height:2px;background:linear-gradient(90deg,#0051ff 0px,#022fff 102px,#2924ff 135px,#6615ff 178px,#cd00ff 243px,#ff00fe 272px,#ff00ce 305px,#ff00a6 344px,#ff0085 391px,#ff006a 447px)"></i>
<i style="top:236px;left:68px;width:444px;height:2px;background:linear-gradient(90deg,#0050ff 0px,#022eff 101px,#2a22ff 135px,#6513ff 178px,#c700ff 240px,#ff00fe 273px,#ff00cf 305px,#ff00a8 343px,#ff0087 389px,#ff006c 444px)"></i>
<i style="top:238px;left:69px;width:441px;height:2px;background:linear-gradient(90deg,#004eff 0px,#002dff 97px,#032cff 101px,#2a21ff 135px,#6712ff 179px,#c100ff 237px,#ff00fe 274px,#ff00d0 306px,#f0a 343px,#ff0089 388px,#ff006e 441px)"></i>
<i style="top:240px;left:70px;width:438px;height:2px;background:linear-gradient(90deg,#004cff 0px,#022bff 100px,#2920ff 134px,#6711ff 179px,#b0f 234px,#ff00fe 275px,#ff00d1 306px,#ff00ab 343px,#ff008c 386px,#ff0071 438px)"></i>
<i style="top:242px;left:71px;width:435px;height:2px;background:linear-gradient(90deg,#004aff 0px,#002bff 96px,#0329ff 100px,#2b1eff 135px,#6610ff 179px,#b500ff 231px,#f0f 276px,#ff00d2 307px,#ff00ac 343px,#ff008d 385px,#ff0073 435px)"></i>
<i style="top:244px;left:72px;width:432px;height:2px;background:linear-gradient(90deg,#0048ff 0px,#002aff 95px,#0328ff 99px,#2a1dff 134px,#660eff 179px,#af00ff 228px,#f0f 277px,#ff00d3 307px,#ff00af 342px,#ff0090 383px,#ff0076 432px)"></i>
<i style="top:246px;left:73px;width:429px;height:2px;background:linear-gradient(90deg,#0047ff 0px,#0028ff 95px,#0327ff 99px,#2c1bff 135px,#680dff 180px,#a0f 225px,#f0f 278px,#ff00d4 308px,#ff00b0 342px,#ff0092 382px,#ff0078 429px)"></i>
<i style="top:248px;left:75px;width:425px;height:2px;background:linear-gradient(90deg,#0045ff 0px,#0027ff 93px,#0326ff 97px,#2b1aff 133px,#670cff 179px,#a600ff 222px,#f0f 278px,#ff00d5 307px,#ff00b3 340px,#ff0094 379px,#ff007b 425px)"></i>
<i style="top:250px;left:76px;width:422px;height:2px;background:linear-gradient(90deg,#0043ff 0px,#0026ff 92px,#0425ff 97px,#2b19ff 133px,#670bff 179px,#a100ff 219px,#f0f 279px,#ff00d7 307px,#ff00b4 340px,#ff0096 378px,#ff007d 422px)"></i>
<i style="top:252px;left:77px;width:419px;height:2px;background:linear-gradient(90deg,#0041ff 0px,#0025ff 92px,#0324ff 96px,#2a18ff 132px,#670aff 179px,#9c00ff 216px,#fe00ff 279px,#ff00d6 309px,#ff00b5 340px,#ff0098 377px,#ff0080 419px)"></i>
<i style="top:254px;left:78px;width:417px;height:2px;background:linear-gradient(90deg,#0040ff 0px,#0024ff 91px,#0422ff 96px,#2c17ff 133px,#6809ff 180px,#9700ff 213px,#fe00ff 280px,#ff00d6 310px,#ff00b7 340px,#ff009a 376px,#ff0082 417px)"></i>
<i style="top:256px;left:79px;width:414px;height:2px;background:linear-gradient(90deg,#003eff 0px,#0023ff 90px,#0421ff 96px,#2e15ff 134px,#6907ff 181px,#9200ff 210px,#fe00ff 281px,#ff00d8 310px,#ff00b8 340px,#ff009c 375px,#ff0085 414px)"></i>
<i style="top:258px;left:80px;width:411px;height:2px;background:linear-gradient(90deg,#003dff 0px,#02f 90px,#0420ff 95px,#2d15ff 133px,#6907ff 181px,#8d00ff 207px,#fe00ff 282px,#ff00d9 310px,#ff00ba 339px,#ff009f 373px,#ff0087 411px)"></i>
<i style="top:260px;left:81px;width:408px;height:2px;background:linear-gradient(90deg,#003bff 0px,#0021ff 89px,#051fff 95px,#2d13ff 133px,#6906ff 181px,#80f 204px,#fe00ff 283px,#ff00d9 311px,#ff00bc 339px,#ff00a2 371px,#ff008a 408px)"></i>
<i style="top:262px;left:83px;width:404px;height:2px;background:linear-gradient(90deg,#0039ff 0px,#0020ff 87px,#051eff 94px,#2f12ff 133px,#6a05ff 181px,#8400ff 200px,#fe00ff 283px,#ff00db 310px,#ff00be 337px,#ff00a4 368px,#ff008d 404px)"></i>
<i style="top:264px;left:84px;width:401px;height:2px;background:linear-gradient(90deg,#0038ff 0px,#001eff 87px,#051dff 93px,#2e11ff 132px,#6a04ff 181px,#7f00ff 197px,#b000ff 232px,#fe00ff 284px,#ff00db 311px,#ff00c0 337px,#ff00a6 367px,#ff0090 401px)"></i>
<i style="top:266px;left:85px;width:398px;height:2px;background:linear-gradient(90deg,#0037ff 0px,#001eff 86px,#051cff 93px,#2e10ff 132px,#6a03ff 181px,#af00ff 232px,#fe00ff 285px,#f0d 311px,#ff00c2 336px,#ff00a9 365px,#ff0093 398px)"></i>
<i style="top:268px;left:86px;width:395px;height:2px;background:linear-gradient(90deg,#0035ff 0px,#001dff 85px,#061aff 93px,#300fff 133px,#6b02ff 182px,#b000ff 233px,#fe00ff 286px,#f0d 312px,#ff00c3 336px,#ff00ab 364px,#ff0096 395px)"></i>
<i style="top:270px;left:87px;width:392px;height:2px;background:linear-gradient(90deg,#0034ff 0px,#001cff 85px,#061aff 92px,#2f0eff 132px,#6b01ff 182px,#b000ff 234px,#fe00ff 287px,#ff00de 312px,#ff00c6 335px,#f09 392px)"></i>
<i style="top:272px;left:88px;width:389px;height:2px;background:linear-gradient(90deg,#0032ff 0px,#001bff 84px,#0618ff 92px,#2f0dff 132px,#6b01ff 182px,#b000ff 234px,#f0f 289px,#ff00e2 310px,#ff00c8 334px,#ff009c 389px)"></i>
<i style="top:274px;left:90px;width:385px;height:2px;background:linear-gradient(90deg,#0031ff 0px,#001aff 82px,#0717ff 91px,#310cff 132px,#6c00ff 182px,#b000ff 234px,#f0f 289px,#ff00e4 309px,#ff00ca 332px,#ff009f 385px)"></i>
<i style="top:276px;left:91px;width:382px;height:2px;background:linear-gradient(90deg,#0030ff 0px,#0019ff 82px,#0716ff 91px,#310bff 132px,#6c00ff 182px,#b000ff 234px,#f0f 290px,#f0c 332px,#ff00a2 382px)"></i>
<i style="top:278px;left:92px;width:379px;height:2px;background:linear-gradient(90deg,#002eff 0px,#0018ff 81px,#0716ff 90px,#300bff 131px,#6c00ff 182px,#b000ff 235px,#f0f 291px,#ff00ce 331px,#ff00a6 379px)"></i>
<i style="top:280px;left:93px;width:376px;height:2px;background:linear-gradient(90deg,#002dff 0px,#0017ff 80px,#0715ff 90px,#3109ff 132px,#6d00ff 183px,#b100ff 236px,#f0f 292px,#ff00d0 330px,#ff00a9 376px)"></i>
<i style="top:282px;left:94px;width:373px;height:2px;background:linear-gradient(90deg,#002cff 0px,#0016ff 80px,#0814ff 90px,#3308ff 133px,#6e00ff 184px,#b100ff 237px,#f0f 293px,#ff00d2 330px,#ff00ac 373px)"></i>
<i style="top:284px;left:96px;width:369px;height:2px;background:linear-gradient(90deg,#002aff 0px,#0016ff 78px,#0813ff 89px,#3308ff 132px,#5800ff 165px,#6d00ff 183px,#b200ff 237px,#f0f 293px,#ff00d4 328px,#ff00b0 369px)"></i>
<i style="top:286px;left:97px;width:366px;height:2px;background:linear-gradient(90deg,#0029ff 0px,#0015ff 77px,#0912ff 89px,#5200ff 160px,#6f00ff 184px,#b200ff 238px,#f0f 294px,#ff00d6 327px,#ff00b3 366px)"></i>
<i style="top:288px;left:98px;width:364px;height:2px;background:linear-gradient(90deg,#0028ff 0px,#0014ff 77px,#0911ff 89px,#5000ff 158px,#6e00ff 184px,#b200ff 238px,#f0f 295px,#ff00d8 327px,#ff00b6 364px)"></i>
<i style="top:290px;left:99px;width:361px;height:2px;background:linear-gradient(90deg,#0027ff 0px,#0013ff 76px,#0a10ff 89px,#4e00ff 156px,#6f00ff 185px,#b200ff 239px,#f0f 296px,#ff00da 326px,#ff00ba 361px)"></i>
<i style="top:292px;left:101px;width:357px;height:2px;background:linear-gradient(90deg,#0026ff 0px,#0012ff 74px,#0a0fff 88px,#4b00ff 152px,#7000ff 185px,#b300ff 239px,#f0f 296px,#ff00db 325px,#ff00bd 357px)"></i>
<i style="top:294px;left:102px;width:354px;height:2px;background:linear-gradient(90deg,#0024ff 0px,#0211ff 77px,#1d09ff 108px,#4600ff 148px,#6700ff 177px,#ae00ff 236px,#f0f 297px,#ff00de 324px,#ff00c1 354px)"></i>
<i style="top:296px;left:103px;width:351px;height:2px;background:linear-gradient(90deg,#0023ff 0px,#0310ff 77px,#40f 146px,#6700ff 177px,#ae00ff 236px,#f0f 298px,#ff00e0 323px,#ff00c5 351px)"></i>
<i style="top:298px;left:104px;width:348px;height:2px;background:linear-gradient(90deg,#02f 0px,#0010ff 72px,#030fff 77px,#4100ff 143px,#6800ff 178px,#ae00ff 237px,#f0f 299px,#ff00e3 322px,#ff00c9 348px)"></i>
<i style="top:300px;left:105px;width:345px;height:2px;background:linear-gradient(90deg,#0021ff 0px,#0010ff 71px,#030eff 77px,#3e00ff 140px,#6900ff 179px,#af00ff 238px,#f0f 300px,#ff00cd 345px)"></i>
<i style="top:302px;left:107px;width:341px;height:2px;background:linear-gradient(90deg,#0020ff 0px,#000fff 70px,#040dff 76px,#3b00ff 136px,#6900ff 178px,#af00ff 238px,#f0f 300px,#ff00d1 341px)"></i>
<i style="top:304px;left:108px;width:338px;height:2px;background:linear-gradient(90deg,#001fff 0px,#000eff 69px,#040dff 76px,#3a00ff 134px,#6a00ff 179px,#b000ff 239px,#f0f 301px,#ff00d5 338px)"></i>
<i style="top:306px;left:109px;width:335px;height:2px;background:linear-gradient(90deg,#001eff 0px,#000eff 68px,#050cff 76px,#3700ff 131px,#6b00ff 180px,#b000ff 240px,#f0f 302px,#ff00d9 335px)"></i>
<i style="top:308px;left:111px;width:331px;height:2px;background:linear-gradient(90deg,#001dff 0px,#000dff 67px,#060bff 76px,#3400ff 127px,#6c00ff 180px,#b100ff 240px,#f0f 302px,#f0d 331px)"></i>
<i style="top:310px;left:112px;width:328px;height:2px;background:linear-gradient(90deg,#001cff 0px,#000cff 66px,#070aff 77px,#3100ff 124px,#6d00ff 181px,#b100ff 241px,#f0f 303px,#ff00e2 328px)"></i>
<i style="top:312px;left:113px;width:325px;height:2px;background:linear-gradient(90deg,#001bff 0px,#000cff 65px,#0909ff 78px,#2f00ff 121px,#6f00ff 183px,#b300ff 243px,#f0f 304px,#ff00e6 325px)"></i>
<i style="top:314px;left:114px;width:322px;height:2px;background:linear-gradient(90deg,#001aff 0px,#000bff 65px,#0a08ff 79px,#2c00ff 118px,#6f00ff 184px,#b400ff 244px,#f0f 305px,#ff00eb 322px)"></i>
<i style="top:316px;left:116px;width:318px;height:2px;background:linear-gradient(90deg,#0019ff 0px,#000aff 63px,#0c07ff 80px,#2a00ff 114px,#7100ff 185px,#b400ff 244px,#f0f 305px,#ff00ef 318px)"></i>
<i style="top:318px;left:117px;width:315px;height:2px;background:linear-gradient(90deg,#0018ff 0px,#000aff 63px,#0e06ff 82px,#2700ff 111px,#7300ff 187px,#b600ff 246px,#f0f 306px,#ff00f4 315px)"></i>
<i style="top:320px;left:118px;width:313px;height:2px;background:linear-gradient(90deg,#0017ff 0px,#0009ff 62px,#0f05ff 83px,#2500ff 108px,#6300ff 172px,#ad00ff 239px,#f0f 307px,#ff00f8 313px)"></i>
<i style="top:322px;left:120px;width:309px;height:2px;background:linear-gradient(90deg,#0016ff 0px,#0009ff 60px,#1203ff 85px,#20f 104px,#7100ff 184px,#ff00fd 309px)"></i>
<i style="top:324px;left:121px;width:306px;height:2px;background:linear-gradient(90deg,#0015ff 0px,#0008ff 60px,#1303ff 86px,#3f00ff 135px,#70f 190px,#b600ff 247px,#fc00ff 306px)"></i>
<i style="top:326px;left:122px;width:303px;height:2px;background:linear-gradient(90deg,#0014ff 0px,#0007ff 59px,#1302ff 85px,#3e00ff 133px,#7500ff 188px,#f800ff 303px)"></i>
<i style="top:328px;left:124px;width:299px;height:2px;background:linear-gradient(90deg,#0013ff 0px,#0007ff 57px,#1302ff 84px,#3d00ff 131px,#7200ff 185px,#f300ff 299px)"></i>
<i style="top:330px;left:125px;width:296px;height:2px;background:linear-gradient(90deg,#0012ff 0px,#0006ff 57px,#1202ff 82px,#3b00ff 129px,#7000ff 183px,#e0f 296px)"></i>
<i style="top:332px;left:126px;width:293px;height:2px;background:linear-gradient(90deg,#0012ff 0px,#0006ff 56px,#1201ff 81px,#3a00ff 128px,#6e00ff 181px,#e900ff 293px)"></i>
<i style="top:334px;left:128px;width:289px;height:2px;background:linear-gradient(90deg,#01f 0px,#0005ff 54px,#1201ff 80px,#3a00ff 126px,#6c00ff 178px,#e500ff 289px)"></i>
<i style="top:336px;left:129px;width:286px;height:2px;background:linear-gradient(90deg,#0010ff 0px,#0005ff 54px,#1200ff 79px,#6a00ff 176px,#e000ff 286px)"></i>
<i style="top:338px;left:130px;width:283px;height:2px;background:linear-gradient(90deg,#000fff 0px,#0004ff 53px,#10f 78px,#6800ff 174px,#dc00ff 283px)"></i>
<i style="top:340px;left:132px;width:279px;height:2px;background:linear-gradient(90deg,#000eff 0px,#0004ff 51px,#10f 76px,#60f 171px,#d800ff 279px)"></i>
<i style="top:342px;left:133px;width:276px;height:2px;background:linear-gradient(90deg,#000eff 0px,#0003ff 51px,#10f 75px,#6400ff 169px,#d300ff 276px)"></i>
<i style="top:344px;left:135px;width:272px;height:2px;background:linear-gradient(90deg,#000dff 0px,#0003ff 49px,#10f 74px,#6200ff 167px,#cf00ff 272px)"></i>
<i style="top:346px;left:136px;width:269px;height:2px;background:linear-gradient(90deg,#000cff 0px,#0003ff 48px,#10f 73px,#6000ff 165px,#cb00ff 269px)"></i>
<i style="top:348px;left:138px;width:265px;height:2px;background:linear-gradient(90deg,#000bff 0px,#0002ff 47px,#10f 72px,#5f00ff 162px,#c700ff 265px)"></i>
<i style="top:350px;left:139px;width:262px;height:2px;background:linear-gradient(90deg,#000aff 0px,#0002ff 46px,#10f 71px,#5d00ff 160px,#c300ff 262px)"></i>
<i style="top:352px;left:141px;width:258px;height:2px;background:linear-gradient(90deg,#000aff 0px,#0001ff 44px,#10f 70px,#5c00ff 158px,#bf00ff 258px)"></i>
<i style="top:354px;left:142px;width:256px;height:2px;background:linear-gradient(90deg,#0009ff 0px,#0001ff 44px,#10f 69px,#5a00ff 156px,#bc00ff 256px)"></i>
<i style="top:356px;left:143px;width:253px;height:2px;background:linear-gradient(90deg,#0008ff 0px,#0001ff 43px,#1000ff 68px,#5800ff 154px,#b900ff 253px)"></i>
<i style="top:358px;left:145px;width:249px;height:2px;background:linear-gradient(90deg,#0007ff 0px,#00f 41px,#10f 67px,#5700ff 152px,#b500ff 249px)"></i>
<i style="top:360px;left:146px;width:246px;height:2px;background:linear-gradient(90deg,#0007ff 0px,#00f 41px,#1000ff 66px,#50f 150px,#b100ff 246px)"></i>
<i style="top:362px;left:148px;width:242px;height:2px;background:linear-gradient(90deg,#0006ff 0px,#00f 39px,#10f 65px,#5400ff 148px,#ae00ff 242px)"></i>
<i style="top:364px;left:149px;width:239px;height:2px;background:linear-gradient(90deg,#0006ff 0px,#00f 38px,#1000ff 64px,#5300ff 146px,#a0f 239px)"></i>
<i style="top:366px;left:151px;width:235px;height:2px;background:linear-gradient(90deg,#0005ff 0px,#00f 37px,#10f 63px,#5100ff 143px,#a700ff 235px)"></i>
<i style="top:368px;left:152px;width:232px;height:2px;background:linear-gradient(90deg,#0004ff 0px,#00f 36px,#1000ff 62px,#4f00ff 141px,#a300ff 232px)"></i>
<i style="top:370px;left:154px;width:228px;height:2px;background:linear-gradient(90deg,#0004ff 0px,#00f 34px,#10f 61px,#4e00ff 139px,#a000ff 228px)"></i>
<i style="top:372px;left:156px;width:224px;height:2px;background:linear-gradient(90deg,#0003ff 0px,#00f 33px,#10f 60px,#4d00ff 136px,#9c00ff 224px)"></i>
<i style="top:374px;left:157px;width:221px;height:2px;background:linear-gradient(90deg,#0002ff 0px,#00f 32px,#10f 59px,#4b00ff 134px,#90f 221px)"></i>
<i style="top:376px;left:159px;width:217px;height:2px;background:linear-gradient(90deg,#0002ff 0px,#00f 30px,#10f 58px,#4a00ff 132px,#9600ff 217px)"></i>
<i style="top:378px;left:160px;width:214px;height:2px;background:linear-gradient(90deg,#0001ff 0px,#00f 30px,#10f 57px,#4900ff 130px,#9300ff 214px)"></i>
<i style="top:380px;left:162px;width:210px;height:2px;background:linear-gradient(90deg,#0001ff 0px,#00f 28px,#10f 56px,#4800ff 128px,#9000ff 210px)"></i>
<i style="top:382px;left:164px;width:206px;height:2px;background:linear-gradient(90deg,#00f 0px,#00f 26px,#1200ff 55px,#4700ff 125px,#8d00ff 206px)"></i>
<i style="top:384px;left:165px;width:203px;height:2px;background:linear-gradient(90deg,#00f 0px,#00f 26px,#10f 54px,#4500ff 123px,#8a00ff 203px)"></i>
<i style="top:386px;left:167px;width:199px;height:2px;background:linear-gradient(90deg,#00f 0px,#00f 24px,#1200ff 54px,#4500ff 122px,#8700ff 199px)"></i>
<i style="top:388px;left:169px;width:196px;height:2px;background:linear-gradient(90deg,#00f 0px,#00f 22px,#1300ff 54px,#40f 120px,#8500ff 196px)"></i>
<i style="top:390px;left:170px;width:193px;height:2px;background:linear-gradient(90deg,#00f 0px,#00f 22px,#1300ff 53px,#4300ff 118px,#8200ff 193px)"></i>
<i style="top:392px;left:172px;width:189px;height:2px;background:linear-gradient(90deg,#00f 0px,#00f 20px,#1300ff 52px,#4200ff 116px,#7f00ff 189px)"></i>
<i style="top:394px;left:174px;width:185px;height:2px;background:linear-gradient(90deg,#00f 0px,#00f 18px,#1400ff 52px,#4200ff 114px,#7c00ff 185px)"></i>
<i style="top:396px;left:175px;width:182px;height:2px;background:linear-gradient(90deg,#00f 0px,#00f 18px,#1400ff 51px,#4000ff 112px,#7900ff 182px)"></i>
<i style="top:398px;left:177px;width:178px;height:2px;background:linear-gradient(90deg,#00f 0px,#00f 16px,#1500ff 51px,#4000ff 111px,#7600ff 178px)"></i>
<i style="top:400px;left:179px;width:174px;height:2px;background:linear-gradient(90deg,#00f 0px,#00f 15px,#1600ff 51px,#4000ff 109px,#7400ff 174px)"></i>
<i style="top:402px;left:181px;width:170px;height:2px;background:linear-gradient(90deg,#00f 0px,#0100ff 14px,#1700ff 51px,#7100ff 170px)"></i>
<i style="top:404px;left:183px;width:166px;height:2px;background:linear-gradient(90deg,#00f 0px,#0100ff 13px,#1800ff 51px,#6f00ff 166px)"></i>
<i style="top:406px;left:185px;width:162px;height:2px;background:linear-gradient(90deg,#00f 0px,#0100ff 12px,#1a00ff 52px,#6c00ff 162px)"></i>
<i style="top:408px;left:187px;width:158px;height:2px;background:linear-gradient(90deg,#00f 0px,#0200ff 12px,#1b00ff 52px,#6900ff 158px)"></i>
<i style="top:410px;left:188px;width:155px;height:2px;background:linear-gradient(90deg,#00f 0px,#0200ff 12px,#1b00ff 52px,#6700ff 155px)"></i>
<i style="top:412px;left:190px;width:151px;height:2px;background:linear-gradient(90deg,#00f 0px,#0400ff 13px,#1c00ff 53px,#6400ff 151px)"></i>
<i style="top:414px;left:192px;width:147px;height:2px;background:linear-gradient(90deg,#00f 0px,#0600ff 16px,#1f00ff 55px,#6200ff 147px)"></i>
<i style="top:416px;left:195px;width:142px;height:2px;background:linear-gradient(90deg,#00f 0px,#20f 58px,#6000ff 142px)"></i>
<i style="top:418px;left:197px;width:138px;height:2px;background:linear-gradient(90deg,#00f 0px,#2300ff 58px,#5d00ff 138px)"></i>
<i style="top:420px;left:199px;width:134px;height:2px;background:linear-gradient(90deg,#0100ff 0px,#2300ff 57px,#5b00ff 134px)"></i>
<i style="top:422px;left:201px;width:131px;height:2px;background:linear-gradient(90deg,#0200ff 0px,#2400ff 57px,#5900ff 131px)"></i>
<i style="top:424px;left:203px;width:127px;height:2px;background:linear-gradient(90deg,#0300ff 0px,#2400ff 55px,#5700ff 127px)"></i>
<i style="top:426px;left:205px;width:123px;height:2px;background:linear-gradient(90deg,#0400ff 0px,#2400ff 54px,#50f 123px)"></i>
<i style="top:428px;left:207px;width:119px;height:2px;background:linear-gradient(90deg,#0400ff 0px,#2400ff 53px,#5300ff 119px)"></i>
<i style="top:430px;left:210px;width:114px;height:2px;background:linear-gradient(90deg,#0600ff 0px,#2500ff 51px,#5100ff 114px)"></i>
<i style="top:432px;left:212px;width:110px;height:2px;background:linear-gradient(90deg,#0700ff 0px,#4e00ff 110px)"></i>
<i style="top:434px;left:214px;width:106px;height:2px;background:linear-gradient(90deg,#0800ff 0px,#4c00ff 106px)"></i>
<i style="top:436px;left:217px;width:101px;height:2px;background:linear-gradient(90deg,#0900ff 0px,#4a00ff 101px)"></i>
<i style="top:438px;left:219px;width:97px;height:2px;background:linear-gradient(90deg,#0a00ff 0px,#4800ff 97px)"></i>
<i style="top:440px;left:221px;width:93px;height:2px;background:linear-gradient(90deg,#0b00ff 0px,#4600ff 93px)"></i>
<i style="top:442px;left:224px;width:88px;height:2px;background:linear-gradient(90deg,#0c00ff 0px,#40f 88px)"></i>
<i style="top:444px;left:226px;width:84px;height:2px;background:linear-gradient(90deg,#0d00ff 0px,#4200ff 84px)"></i>
<i style="top:446px;left:229px;width:79px;height:2px;background:linear-gradient(90deg,#0e00ff 0px,#4000ff 79px)"></i>
<i style="top:448px;left:231px;width:75px;height:2px;background:linear-gradient(90deg,#0f00ff 0px,#3e00ff 75px)"></i>
<i style="top:450px;left:233px;width:71px;height:2px;background:linear-gradient(90deg,#1000ff 0px,#3c00ff 71px)"></i>
<i style="top:452px;left:236px;width:66px;height:2px;background:linear-gradient(90deg,#1200ff 0px,#3b00ff 66px)"></i>
<i style="top:454px;left:238px;width:62px;height:2px;background:linear-gradient(90deg,#1200ff 0px,#3900ff 62px)"></i>
<i style="top:456px;left:241px;width:58px;height:2px;background:linear-gradient(90deg,#1400ff 0px,#3800ff 58px)"></i>
<i style="top:458px;left:243px;width:54px;height:2px;background:linear-gradient(90deg,#1500ff 0px,#3600ff 54px)"></i>
<i style="top:460px;left:245px;width:50px;height:2px;background:linear-gradient(90deg,#1600ff 0px,#3400ff 50px)"></i>
<i style="top:462px;left:248px;width:45px;height:2px;background:linear-gradient(90deg,#1700ff 0px,#3200ff 45px)"></i>
<i style="top:464px;left:250px;width:41px;height:2px;background:linear-gradient(90deg,#1800ff 0px,#3000ff 41px)"></i>
<i style="top:466px;left:253px;width:36px;height:2px;background:linear-gradient(90deg,#1900ff 0px,#2f00ff 36px)"></i>
<i style="top:468px;left:255px;width:32px;height:2px;background:linear-gradient(90deg,#1a00ff 0px,#2d00ff 32px)"></i>
<i style="top:470px;left:257px;width:28px;height:2px;background:linear-gradient(90deg,#1b00ff 0px,#2b00ff 28px)"></i>
<i style="top:472px;left:260px;width:23px;height:2px;background:linear-gradient(90deg,#1c00ff 0px,#2a00ff 23px)"></i>
<i style="top:474px;left:263px;width:18px;height:2px;background:linear-gradient(90deg,#1e00ff 0px,#2800ff 18px)"></i>
<i style="top:476px;left:265px;width:14px;height:2px;background:linear-gradient(90deg,#1e00ff 0px,#2700ff 14px)"></i>
<i style="top:478px;left:270px;width:7px;height:2px;background:linear-gradient(90deg,#2100ff 0px,#2500ff 7px)"></i></div>
<div class="f" style="left:1441px;top:430px;width:211px;height:143px;"><i style="top:0px;left:0px;width:211px;height:2px;background:linear-gradient(90deg,#64ff00 0px,#acff00 85px,#feff00 166px,#ffd500 211px)"></i>
<i style="top:2px;left:0px;width:211px;height:2px;background:linear-gradient(90deg,#65ff00 0px,#aeff00 85px,#ff0 165px,#ffd300 211px)"></i>
<i style="top:4px;left:0px;width:211px;height:2px;background:linear-gradient(90deg,#6f0 0px,#adff00 83px,#ff0 163px,#ffd100 211px)"></i>
<i style="top:6px;left:0px;width:211px;height:2px;background:linear-gradient(90deg,#67ff00 0px,#aeff00 82px,#ff0 161px,#ffd000 211px)"></i>
<i style="top:8px;left:0px;width:211px;height:2px;background:linear-gradient(90deg,#68ff00 0px,#aeff00 81px,#feff00 159px,#ffce00 211px)"></i>
<i style="top:10px;left:0px;width:211px;height:2px;background:linear-gradient(90deg,#69ff00 0px,#afff00 80px,#ff0 158px,#ffcd00 211px)"></i>
<i style="top:12px;left:0px;width:211px;height:2px;background:linear-gradient(90deg,#6aff00 0px,#b0ff00 80px,#ff0 156px,#ffcb00 211px)"></i>
<i style="top:14px;left:0px;width:211px;height:2px;background:linear-gradient(90deg,#6bff00 0px,#b1ff00 79px,#ff0 154px,#ffca00 211px)"></i>
<i style="top:16px;left:0px;width:211px;height:2px;background:linear-gradient(90deg,#6cff01 0px,#b1ff00 78px,#feff00 152px,#ffc800 211px)"></i>
<i style="top:18px;left:0px;width:211px;height:2px;background:linear-gradient(90deg,#6eff01 0px,#b1ff00 76px,#ff0 151px,#ffe100 180px,#ffc600 211px)"></i>
<i style="top:20px;left:0px;width:211px;height:2px;background:linear-gradient(90deg,#6fff01 0px,#b3ff00 76px,#ff0 149px,#ffe000 179px,#ffc500 211px)"></i>
<i style="top:22px;left:0px;width:211px;height:2px;background:linear-gradient(90deg,#70ff02 0px,#b3ff00 75px,#ff0 147px,#ffdf00 178px,#ffc300 211px)"></i>
<i style="top:24px;left:0px;width:211px;height:2px;background:linear-gradient(90deg,#71ff02 0px,#b4ff00 74px,#ff0 145px,#ffde00 177px,#ffc200 211px)"></i>
<i style="top:26px;left:0px;width:211px;height:2px;background:linear-gradient(90deg,#72ff03 0px,#b4ff00 73px,#feff00 143px,#fd0 177px,#ffc000 211px)"></i>
<i style="top:28px;left:0px;width:211px;height:2px;background:linear-gradient(90deg,#73ff04 0px,#b5ff00 72px,#ff0 142px,#fd0 175px,#ffbf00 211px)"></i>
<i style="top:30px;left:0px;width:211px;height:2px;background:linear-gradient(90deg,#74ff04 0px,#b6ff00 72px,#ff0 140px,#ffdc00 174px,#ffbd00 211px)"></i>
<i style="top:32px;left:0px;width:211px;height:2px;background:linear-gradient(90deg,#75ff05 0px,#b7ff00 71px,#ff0 138px,#ffdb00 173px,#ffbc00 211px)"></i>
<i style="top:34px;left:0px;width:211px;height:2px;background:linear-gradient(90deg,#77ff05 0px,#b7ff00 70px,#ff0 136px,#ffd900 173px,#ffba00 211px)"></i>
<i style="top:36px;left:0px;width:211px;height:2px;background:linear-gradient(90deg,#78ff06 0px,#b7ff00 68px,#ff0 135px,#ffda00 171px,#ffb900 211px)"></i>
<i style="top:38px;left:0px;width:211px;height:2px;background:linear-gradient(90deg,#79ff06 0px,#b8ff00 67px,#ff0 133px,#ffd900 170px,#ffb700 211px)"></i>
<i style="top:40px;left:0px;width:211px;height:2px;background:linear-gradient(90deg,#7aff07 0px,#b9ff00 67px,#ff0 131px,#ffd800 169px,#ffb600 211px)"></i>
<i style="top:42px;left:0px;width:211px;height:2px;background:linear-gradient(90deg,#7bff08 0px,#baff00 66px,#ff0 129px,#ffd700 168px,#ffb500 211px)"></i>
<i style="top:44px;left:0px;width:211px;height:2px;background:linear-gradient(90deg,#7cff08 0px,#baff00 65px,#feff00 127px,#ffd500 168px,#ffb300 211px)"></i>
<i style="top:46px;left:0px;width:211px;height:2px;background:linear-gradient(90deg,#7eff09 0px,#b8ff00 61px,#ff0 126px,#ffd500 166px,#ffb200 211px)"></i>
<i style="top:48px;left:0px;width:211px;height:2px;background:linear-gradient(90deg,#7fff09 0px,#beff00 65px,#ff0 124px,#ffd500 165px,#ffb000 211px)"></i>
<i style="top:50px;left:0px;width:211px;height:2px;background:linear-gradient(90deg,#80ff0a 0px,#c2ff00 68px,#ff0 122px,#ffd400 164px,#ffaf00 211px)"></i>
<i style="top:52px;left:0px;width:211px;height:2px;background:linear-gradient(90deg,#81ff0b 0px,#c8ff00 72px,#ff0 120px,#ffd300 163px,#ffad00 211px)"></i>
<i style="top:54px;left:0px;width:211px;height:2px;background:linear-gradient(90deg,#83ff0b 0px,#cfff00 76px,#fffe00 119px,#ffd200 162px,#ffac00 211px)"></i>
<i style="top:56px;left:0px;width:211px;height:2px;background:linear-gradient(90deg,#84ff0c 0px,#beff03 59px,#ff0 117px,#ffd100 161px,#ffab00 211px)"></i>
<i style="top:58px;left:0px;width:211px;height:2px;background:linear-gradient(90deg,#85ff0d 0px,#c0ff03 59px,#ff0 115px,#ffd000 160px,#ffa900 211px)"></i>
<i style="top:60px;left:0px;width:211px;height:2px;background:linear-gradient(90deg,#87ff0e 0px,#c0ff04 58px,#ff0 113px,#ffd000 159px,#ffa800 211px)"></i>
<i style="top:62px;left:0px;width:211px;height:2px;background:linear-gradient(90deg,#88ff0e 0px,#c1ff05 57px,#feff00 111px,#ffcf00 158px,#ffa700 211px)"></i>
<i style="top:64px;left:0px;width:211px;height:2px;background:linear-gradient(90deg,#89ff0f 0px,#c0ff06 54px,#ff0 110px,#ffce00 157px,#ffa500 211px)"></i>
<i style="top:66px;left:0px;width:211px;height:2px;background:linear-gradient(90deg,#8bff10 0px,#c1ff07 54px,#ff0 108px,#ffce00 155px,#ffa400 211px)"></i>
<i style="top:68px;left:0px;width:211px;height:2px;background:linear-gradient(90deg,#8cff10 0px,#c3ff08 54px,#ff0 106px,#ffcd00 154px,#ffa200 211px)"></i>
<i style="top:70px;left:0px;width:211px;height:2px;background:linear-gradient(90deg,#8dff11 0px,#c4ff08 53px,#ff0 104px,#ffcb00 154px,#ffa100 211px)"></i>
<i style="top:72px;left:0px;width:211px;height:2px;background:linear-gradient(90deg,#8fff12 0px,#c2ff0a 50px,#fffe01 103px,#ffcb00 153px,#ffa000 211px)"></i>
<i style="top:74px;left:0px;width:211px;height:2px;background:linear-gradient(90deg,#90ff13 0px,#c4ff0a 50px,#ffff02 101px,#ffcb00 151px,#ff9e00 211px)"></i>
<i style="top:76px;left:0px;width:211px;height:2px;background:linear-gradient(90deg,#92ff13 0px,#c6ff0b 50px,#ffff03 99px,#ffca00 150px,#ff9d00 211px)"></i>
<i style="top:78px;left:0px;width:211px;height:2px;background:linear-gradient(90deg,#93ff14 0px,#c6ff0c 49px,#ffff04 97px,#ffc900 149px,#ff9c00 211px)"></i>
<i style="top:80px;left:0px;width:211px;height:2px;background:linear-gradient(90deg,#95ff15 0px,#c7ff0d 48px,#ffff05 95px,#ffc700 149px,#ff9a00 211px)"></i>
<i style="top:82px;left:0px;width:211px;height:2px;background:linear-gradient(90deg,#96ff16 0px,#c7ff0e 46px,#fffe06 94px,#ffc700 147px,#f90 211px)"></i>
<i style="top:84px;left:0px;width:211px;height:2px;background:linear-gradient(90deg,#98ff17 0px,#c9ff0f 46px,#ffff07 92px,#ffe102 118px,#ffc600 146px,#ff9800 211px)"></i>
<i style="top:86px;left:0px;width:211px;height:2px;background:linear-gradient(90deg,#99ff18 0px,#caff10 46px,#ffff08 90px,#ffe103 116px,#ffc600 145px,#ff9700 211px)"></i>
<i style="top:88px;left:0px;width:211px;height:2px;background:linear-gradient(90deg,#9bff18 0px,#cbff11 45px,#ffff09 88px,#ffe003 115px,#ffc500 144px,#ff9500 211px)"></i>
<i style="top:90px;left:0px;width:211px;height:2px;background:linear-gradient(90deg,#9cff19 0px,#fffe0a 87px,#ffdf04 114px,#ffc400 143px,#ff9400 211px)"></i>
<i style="top:92px;left:0px;width:211px;height:2px;background:linear-gradient(90deg,#9eff1a 0px,#ffff0b 85px,#ffdf05 112px,#ffc301 142px,#ff9300 211px)"></i>
<i style="top:94px;left:0px;width:211px;height:2px;background:linear-gradient(90deg,#9fff1b 0px,#ffff0c 83px,#ffdf06 111px,#ffc201 141px,#ff9100 211px)"></i>
<i style="top:96px;left:0px;width:211px;height:2px;background:linear-gradient(90deg,#a1ff1c 0px,#ffff0d 81px,#ffdf07 109px,#ffc102 140px,#ffa700 174px,#ff9000 211px)"></i>
<i style="top:98px;left:0px;width:211px;height:2px;background:linear-gradient(90deg,#a2ff1d 0px,#ffff0e 79px,#ffde08 108px,#ffc102 139px,#ffa700 173px,#ff8f00 211px)"></i>
<i style="top:100px;left:0px;width:211px;height:2px;background:linear-gradient(90deg,#a4ff1e 0px,#fffe0f 78px,#ffde09 106px,#ffc003 138px,#ffa500 173px,#ff8e00 211px)"></i>
<i style="top:102px;left:0px;width:211px;height:2px;background:linear-gradient(90deg,#a6ff1f 0px,#ff1 76px,#ffdd0a 105px,#ffbf04 137px,#ffa400 172px,#ff8c00 211px)"></i>
<i style="top:104px;left:0px;width:211px;height:2px;background:linear-gradient(90deg,#a7ff20 0px,#ffff12 74px,#ffdd0b 103px,#ffbf05 135px,#ffa400 171px,#ff8b00 211px)"></i>
<i style="top:106px;left:0px;width:211px;height:2px;background:linear-gradient(90deg,#a9ff21 0px,#ffff13 72px,#ffdc0c 102px,#ffbe05 134px,#ffa300 170px,#ff8a00 211px)"></i>
<i style="top:108px;left:0px;width:211px;height:2px;background:linear-gradient(90deg,#abff21 0px,#fffe14 71px,#ffdb0c 101px,#ffbc06 134px,#ffa101 170px,#ff8900 211px)"></i>
<i style="top:110px;left:0px;width:211px;height:2px;background:linear-gradient(90deg,#acff22 0px,#fffe16 69px,#ffdb0e 99px,#ffbc07 132px,#ffa101 169px,#ff8700 211px)"></i>
<i style="top:112px;left:0px;width:211px;height:2px;background:linear-gradient(90deg,#aeff23 0px,#ffff17 67px,#ffdb0f 97px,#ffbc08 131px,#ff9f02 169px,#ff8600 211px)"></i>
<i style="top:114px;left:0px;width:211px;height:2px;background:linear-gradient(90deg,#b0ff24 0px,#ffff18 65px,#ffda10 96px,#ffbb08 130px,#ff9e02 168px,#ff8500 211px)"></i>
<i style="top:116px;left:0px;width:211px;height:2px;background:linear-gradient(90deg,#b1ff25 0px,#ffff1a 63px,#ffda11 95px,#ffba09 129px,#ff9d03 168px,#ff8400 211px)"></i>
<i style="top:118px;left:0px;width:211px;height:2px;background:linear-gradient(90deg,#b3ff26 0px,#fffe1b 62px,#ffda12 93px,#ffb90a 128px,#ff9c03 167px,#ff8300 211px)"></i>
<i style="top:120px;left:0px;width:211px;height:2px;background:linear-gradient(90deg,#b5ff27 0px,#ffff1c 60px,#ffd913 92px,#ffb80b 127px,#ff9b04 167px,#ff8100 211px)"></i>
<i style="top:122px;left:0px;width:211px;height:2px;background:linear-gradient(90deg,#b7ff29 0px,#ffff1e 58px,#ffd914 90px,#ffb70b 126px,#ff9a04 166px,#ff8000 211px)"></i>
<i style="top:124px;left:0px;width:211px;height:2px;background:linear-gradient(90deg,#b9ff2a 0px,#ffff1f 56px,#ffd915 88px,#ffb70c 124px,#ff9905 165px,#ff7f00 211px)"></i>
<i style="top:126px;left:0px;width:211px;height:2px;background:linear-gradient(90deg,#bbff2b 0px,#fffe20 55px,#ffd816 87px,#ffb60d 124px,#ff9806 165px,#ff7e00 211px)"></i>
<i style="top:128px;left:0px;width:211px;height:2px;background:linear-gradient(90deg,#bcff2c 0px,#fffe22 53px,#ffd817 85px,#ffb60e 122px,#ff9706 164px,#ff7d00 211px)"></i>
<i style="top:130px;left:0px;width:211px;height:2px;background:linear-gradient(90deg,#beff2d 0px,#ffff23 51px,#ffd718 84px,#ffb50f 121px,#ff9607 163px,#ff7c01 211px)"></i>
<i style="top:132px;left:0px;width:211px;height:2px;background:linear-gradient(90deg,#c0ff2e 0px,#ffff25 49px,#ffd719 82px,#ffb410 120px,#ff9507 163px,#ff7a01 211px)"></i>
<i style="top:134px;left:0px;width:211px;height:2px;background:linear-gradient(90deg,#c2ff2f 0px,#ffff26 47px,#ffd61a 81px,#ffb310 119px,#ff9408 162px,#ff7901 211px)"></i>
<i style="top:136px;left:0px;width:211px;height:2px;background:linear-gradient(90deg,#c4ff30 0px,#fffe27 46px,#ffd51b 80px,#ffb211 118px,#ff9309 162px,#ff7802 211px)"></i>
<i style="top:138px;left:0px;width:211px;height:2px;background:linear-gradient(90deg,#c6ff31 0px,#fffe29 44px,#ffd51d 78px,#ffb112 117px,#ff9209 161px,#ff7702 211px)"></i>
<i style="top:140px;left:0px;width:211px;height:2px;background:linear-gradient(90deg,#c8ff33 0px,#ffff2b 42px,#ffd41e 77px,#ffb013 116px,#ff910a 160px,#ff7603 211px)"></i>
<i style="top:142px;left:0px;width:211px;height:1px;background:linear-gradient(90deg,#caff34 0px,#fffe2c 41px,#ffd41f 76px,#ffb014 115px,#ff900a 160px,#ff7503 211px)"></i></div>
<svg width="1663" height="942" viewBox="0 0 1663 942">
<clipPath id="cpm"><rect x="1019" y="89" width="639" height="492"/></clipPath>
<path d="M1679.6 163.8 L1191.6 107.8 L1155.2 103.8 L1131.4 101.5 L1110.0 99.7 L1093.7 98.8 L1075.3 98.3 L1066.3 98.4 L1057.3 98.9 L1056.7 99.2 L1056.5 99.8 L1048.9 100.7 L1043.7 101.8 L1038.8 103.4 L1036.4 104.5 L1032.1 107.3 L1030.2 108.9 L1028.4 110.9 L1026.8 113.0 L1025.3 115.4 L1024.0 118.0 L1022.9 120.9 L1022.0 124.0 L1021.4 127.4 L1020.6 134.9 L1020.7 143.7 L1021.2 148.6 L1022.8 159.6 L1025.4 172.4 L1029.3 187.0 L1034.5 203.6 L1041.1 222.2 L1044.9 232.2 L1053.5 253.4 L1063.3 275.8 L1068.7 287.4 L1074.5 299.1 L1080.6 311.0 L1087.0 322.9 L1100.3 346.4 L1113.9 369.4 L1127.6 391.6 L1134.3 402.2 L1147.5 422.0 L1154.0 431.3 L1166.3 448.3 L1172.3 456.1 L1183.7 470.5 L1194.0 482.8 L1203.1 492.9 L1211.2 501.3 L1218.6 508.4 L1228.9 517.9 L1238.1 525.9 L1278.7 559.7 L1285.7 565.0 L1288.3 566.5 L1289.9 566.8 L1290.5 568.0 L1291.1 568.3 L1292.0 568.6 L1292.8 568.5 L1293.8 567.9 L1683.8 166.0 L1684.0 165.2 L1683.9 164.3 L1683.5 163.5 L1682.8 162.9 L1682.2 162.7 L1681.3 162.7 L1680.4 163.1 L1679.6 163.8 Z M1498.4 152.3 L1152.4 119.2 L1206.6 449.2 Z" fill="#000" fill-opacity="0.40" fill-rule="evenodd" clip-path="url(#cpm)"/>
<path d="M1018.2 89.0 H1657.8 V580.4" fill="none" stroke="#a6a6a6" stroke-width="1.3"/>
<path d="M1018.5 88.4 V580.3 H1658.4" fill="none" stroke="#b8b8b8" stroke-width="1.5"/>
<rect x="1012" y="579.6" width="6.5" height="1.6" fill="#c8c8c8"/>
<text x="1012.2" y="588.0" font-size="14.0" fill="#dcdcdc" text-anchor="end">0</text>
<rect x="1018.2" y="580.4" width="1.8" height="7" fill="#c8c8c8"/>
<text x="1019.1" y="602.3" font-size="14.4" fill="#dcdcdc" text-anchor="middle">0</text>
<rect x="1012" y="538.6" width="6.5" height="1.6" fill="#c8c8c8"/>
<text x="1012.2" y="546.9" font-size="14.0" fill="#dcdcdc" text-anchor="end">0,05</text>
<rect x="1071.3" y="580.4" width="1.8" height="7" fill="#c8c8c8"/>
<text x="1072.2" y="602.3" font-size="14.4" fill="#dcdcdc" text-anchor="middle">0,05</text>
<rect x="1012" y="497.7" width="6.5" height="1.6" fill="#c8c8c8"/>
<text x="1012.2" y="505.7" font-size="14.0" fill="#dcdcdc" text-anchor="end">0,1</text>
<rect x="1124.5" y="580.4" width="1.8" height="7" fill="#c8c8c8"/>
<text x="1125.4" y="602.3" font-size="14.4" fill="#dcdcdc" text-anchor="middle">0,1</text>
<rect x="1012" y="456.7" width="6.5" height="1.6" fill="#c8c8c8"/>
<text x="1012.2" y="464.6" font-size="14.0" fill="#dcdcdc" text-anchor="end">0,15</text>
<rect x="1177.6" y="580.4" width="1.8" height="7" fill="#c8c8c8"/>
<text x="1178.5" y="602.3" font-size="14.4" fill="#dcdcdc" text-anchor="middle">0,15</text>
<rect x="1012" y="415.8" width="6.5" height="1.6" fill="#c8c8c8"/>
<text x="1012.2" y="423.4" font-size="14.0" fill="#dcdcdc" text-anchor="end">0,2</text>
<rect x="1230.8" y="580.4" width="1.8" height="7" fill="#c8c8c8"/>
<text x="1231.7" y="602.3" font-size="14.4" fill="#dcdcdc" text-anchor="middle">0,2</text>
<rect x="1012" y="374.8" width="6.5" height="1.6" fill="#c8c8c8"/>
<text x="1012.2" y="382.3" font-size="14.0" fill="#dcdcdc" text-anchor="end">0,25</text>
<rect x="1283.9" y="580.4" width="1.8" height="7" fill="#c8c8c8"/>
<text x="1284.8" y="602.3" font-size="14.4" fill="#dcdcdc" text-anchor="middle">0,25</text>
<rect x="1012" y="333.9" width="6.5" height="1.6" fill="#c8c8c8"/>
<text x="1012.2" y="341.2" font-size="14.0" fill="#dcdcdc" text-anchor="end">0,3</text>
<rect x="1337.1" y="580.4" width="1.8" height="7" fill="#c8c8c8"/>
<text x="1338.0" y="602.3" font-size="14.4" fill="#dcdcdc" text-anchor="middle">0,3</text>
<rect x="1012" y="292.9" width="6.5" height="1.6" fill="#c8c8c8"/>
<text x="1012.2" y="300.0" font-size="14.0" fill="#dcdcdc" text-anchor="end">0,35</text>
<rect x="1390.2" y="580.4" width="1.8" height="7" fill="#c8c8c8"/>
<text x="1391.2" y="602.3" font-size="14.4" fill="#dcdcdc" text-anchor="middle">0,35</text>
<rect x="1012" y="252.0" width="6.5" height="1.6" fill="#c8c8c8"/>
<text x="1012.2" y="258.9" font-size="14.0" fill="#dcdcdc" text-anchor="end">0,4</text>
<rect x="1443.4" y="580.4" width="1.8" height="7" fill="#c8c8c8"/>
<text x="1444.3" y="602.3" font-size="14.4" fill="#dcdcdc" text-anchor="middle">0,4</text>
<rect x="1012" y="211.0" width="6.5" height="1.6" fill="#c8c8c8"/>
<text x="1012.2" y="217.7" font-size="14.0" fill="#dcdcdc" text-anchor="end">0,45</text>
<rect x="1496.5" y="580.4" width="1.8" height="7" fill="#c8c8c8"/>
<text x="1497.5" y="602.3" font-size="14.4" fill="#dcdcdc" text-anchor="middle">0,45</text>
<rect x="1012" y="170.1" width="6.5" height="1.6" fill="#c8c8c8"/>
<text x="1012.2" y="176.6" font-size="14.0" fill="#dcdcdc" text-anchor="end">0,5</text>
<rect x="1549.7" y="580.4" width="1.8" height="7" fill="#c8c8c8"/>
<text x="1550.6" y="602.3" font-size="14.4" fill="#dcdcdc" text-anchor="middle">0,5</text>
<rect x="1012" y="129.1" width="6.5" height="1.6" fill="#c8c8c8"/>
<text x="1012.2" y="135.4" font-size="14.0" fill="#dcdcdc" text-anchor="end">0,55</text>
<rect x="1602.8" y="580.4" width="1.8" height="7" fill="#c8c8c8"/>
<text x="1603.8" y="602.3" font-size="14.4" fill="#dcdcdc" text-anchor="middle">0,55</text>
<text x="1321.6" y="82.5" font-size="13.8" fill="#dadada" text-anchor="middle" textLength="84.0" lengthAdjust="spacingAndGlyphs">CIE 1976 u'v'</text>
<rect x="1145.1" y="112.1" width="13" height="13" fill="none" stroke="#fff" stroke-opacity=".9" stroke-width="1.5"/>
<rect x="1157.2" y="123.9" width="13" height="13" fill="none" stroke="#fff" stroke-opacity=".9" stroke-width="1.5"/>
<rect x="1169.0" y="135.9" width="13" height="13" fill="none" stroke="#fff" stroke-opacity=".9" stroke-width="1.5"/>
<rect x="1184.0" y="150.9" width="13" height="13" fill="none" stroke="#fff" stroke-opacity=".9" stroke-width="1.5"/>
<rect x="1202.0" y="167.9" width="13" height="13" fill="none" stroke="#fff" stroke-opacity=".9" stroke-width="1.5"/>
<rect x="1229.1" y="119.7" width="13" height="13" fill="none" stroke="#fff" stroke-opacity=".9" stroke-width="1.5"/>
<rect x="1227.9" y="131.6" width="13" height="13" fill="none" stroke="#fff" stroke-opacity=".9" stroke-width="1.5"/>
<rect x="1227.6" y="143.3" width="13" height="13" fill="none" stroke="#fff" stroke-opacity=".9" stroke-width="1.5"/>
<rect x="1226.0" y="157.0" width="13" height="13" fill="none" stroke="#fff" stroke-opacity=".9" stroke-width="1.5"/>
<rect x="1224.9" y="171.3" width="13" height="13" fill="none" stroke="#fff" stroke-opacity=".9" stroke-width="1.5"/>
<rect x="1270.9" y="180.9" width="13" height="13" fill="none" stroke="#fff" stroke-opacity=".9" stroke-width="1.5"/>
<rect x="1323.9" y="171.9" width="13" height="13" fill="none" stroke="#fff" stroke-opacity=".9" stroke-width="1.5"/>
<rect x="1373.0" y="164.9" width="13" height="13" fill="none" stroke="#fff" stroke-opacity=".9" stroke-width="1.5"/>
<rect x="1428.0" y="155.1" width="13" height="13" fill="none" stroke="#fff" stroke-opacity=".9" stroke-width="1.5"/>
<rect x="1492.2" y="144.5" width="13" height="13" fill="none" stroke="#fff" stroke-opacity=".9" stroke-width="1.5"/>
<rect x="1159.1" y="199.9" width="13" height="13" fill="none" stroke="#fff" stroke-opacity=".9" stroke-width="1.5"/>
<rect x="1171.5" y="197.0" width="13" height="13" fill="none" stroke="#fff" stroke-opacity=".9" stroke-width="1.5"/>
<rect x="1183.9" y="195.3" width="13" height="13" fill="none" stroke="#fff" stroke-opacity=".9" stroke-width="1.5"/>
<rect x="1197.3" y="192.8" width="13" height="13" fill="none" stroke="#fff" stroke-opacity=".9" stroke-width="1.5"/>
<rect x="1209.7" y="190.9" width="13" height="13" fill="none" stroke="#fff" stroke-opacity=".9" stroke-width="1.5"/>
<rect x="1239.9" y="205.8" width="13" height="13" fill="none" stroke="#fff" stroke-opacity=".9" stroke-width="1.5"/>
<rect x="1259.0" y="224.9" width="13" height="13" fill="none" stroke="#fff" stroke-opacity=".9" stroke-width="1.5"/>
<rect x="1277.9" y="245.0" width="13" height="13" fill="none" stroke="#fff" stroke-opacity=".9" stroke-width="1.5"/>
<rect x="1303.9" y="271.0" width="13" height="13" fill="none" stroke="#fff" stroke-opacity=".9" stroke-width="1.5"/>
<rect x="1337.2" y="301.9" width="13" height="13" fill="none" stroke="#fff" stroke-opacity=".9" stroke-width="1.5"/>
<rect x="1219.7" y="218.8" width="13" height="13" fill="none" stroke="#fff" stroke-opacity=".9" stroke-width="1.5"/>
<rect x="1217.0" y="255.9" width="13" height="13" fill="none" stroke="#fff" stroke-opacity=".9" stroke-width="1.5"/>
<rect x="1213.0" y="301.0" width="13" height="13" fill="none" stroke="#fff" stroke-opacity=".9" stroke-width="1.5"/>
<rect x="1206.9" y="357.8" width="13" height="13" fill="none" stroke="#fff" stroke-opacity=".9" stroke-width="1.5"/>
<rect x="1198.9" y="443.9" width="13" height="13" fill="none" stroke="#fff" stroke-opacity=".9" stroke-width="1.5"/>
<rect x="1222.2" y="189.0" width="12.8" height="12.8" fill="none" stroke="#000" stroke-width="1.8"/>
<circle cx="1154.1" cy="111.3" r="4.30" fill="#10aa10" stroke="#000" stroke-width="1.15"/>
<circle cx="1159.5" cy="120.9" r="4.30" fill="#5cae58" stroke="#000" stroke-width="1.15"/>
<circle cx="1167.5" cy="133.2" r="4.30" fill="#72b46c" stroke="#000" stroke-width="1.15"/>
<circle cx="1181.1" cy="153.3" r="4.40" fill="#8eae86" stroke="#000" stroke-width="1.15"/>
<circle cx="1197.4" cy="177.9" r="4.40" fill="#a4b8a0" stroke="#000" stroke-width="1.15"/>
<circle cx="1214.0" cy="116.7" r="4.40" fill="#c8bc20" stroke="#000" stroke-width="1.15"/>
<circle cx="1214.9" cy="125.2" r="4.40" fill="#c0b458" stroke="#000" stroke-width="1.15"/>
<circle cx="1214.9" cy="138.9" r="4.40" fill="#bcb470" stroke="#000" stroke-width="1.15"/>
<circle cx="1215.0" cy="158.9" r="4.40" fill="#bcb484" stroke="#000" stroke-width="1.15"/>
<circle cx="1214.0" cy="181.0" r="4.40" fill="#bab896" stroke="#000" stroke-width="1.15"/>
<circle cx="1213.9" cy="201.6" r="4.10" fill="#ffffff" stroke="#000" stroke-width="1.15"/>
<circle cx="1203.8" cy="202.8" r="4.30" fill="#a0bcbc" stroke="#000" stroke-width="1.15"/>
<circle cx="1194.4" cy="205.3" r="4.10" fill="#90bcb8" stroke="#000" stroke-width="1.15"/>
<circle cx="1182.4" cy="207.9" r="4.10" fill="#70bcb8" stroke="#000" stroke-width="1.15"/>
<circle cx="1174.6" cy="211.0" r="4.10" fill="#58bcb8" stroke="#000" stroke-width="1.15"/>
<circle cx="1167.5" cy="215.0" r="4.10" fill="#28b8b4" stroke="#000" stroke-width="1.15"/>
<circle cx="1256.0" cy="192.1" r="4.40" fill="#bc8890" stroke="#000" stroke-width="1.15"/>
<circle cx="1317.0" cy="179.5" r="4.00" fill="#c46068" stroke="#000" stroke-width="1.15"/>
<circle cx="1371.5" cy="168.5" r="4.00" fill="#c85058" stroke="#000" stroke-width="1.15"/>
<circle cx="1429.0" cy="156.4" r="4.20" fill="#c43c44" stroke="#000" stroke-width="1.15"/>
<circle cx="1476.6" cy="146.8" r="3.90" fill="#b80808" stroke="#000" stroke-width="1.15"/>
<circle cx="1224.4" cy="217.5" r="3.90" fill="#b8a0b8" stroke="#000" stroke-width="1.15"/>
<circle cx="1239.5" cy="239.5" r="3.90" fill="#b888b8" stroke="#000" stroke-width="1.15"/>
<circle cx="1254.6" cy="261.4" r="3.90" fill="#bc70b8" stroke="#000" stroke-width="1.15"/>
<circle cx="1273.5" cy="290.1" r="4.00" fill="#bc58b4" stroke="#000" stroke-width="1.15"/>
<circle cx="1294.0" cy="319.9" r="4.20" fill="#c010b0" stroke="#000" stroke-width="1.15"/>
<circle cx="1210.9" cy="230.1" r="4.40" fill="#a09cc0" stroke="#000" stroke-width="1.15"/>
<circle cx="1207.0" cy="270.8" r="4.30" fill="#8884c0" stroke="#000" stroke-width="1.15"/>
<circle cx="1203.0" cy="316.9" r="4.30" fill="#6c68c4" stroke="#000" stroke-width="1.15"/>
<circle cx="1199.0" cy="363.4" r="4.10" fill="#5450c4" stroke="#000" stroke-width="1.15"/>
<circle cx="1193.5" cy="413.2" r="3.90" fill="#1808c8" stroke="#000" stroke-width="1.15"/>
<clipPath id="cpi"><rect x="1441" y="430" width="211" height="143"/></clipPath>
<g clip-path="url(#cpi)"><path d="M1051.0 1184.3 L1051.0 1184.3 L1050.9 1184.2 L1050.9 1184.2 L1050.9 1184.2 L1050.8 1184.2 L1050.7 1184.3 L1050.6 1184.3 L1050.6 1184.3 L1050.5 1184.3 L1050.4 1184.3 L1050.3 1184.3 L1050.2 1184.3 L1050.1 1184.3 L1050.0 1184.3 L1049.9 1184.3 L1049.8 1184.4 L1049.7 1184.4 L1049.6 1184.4 L1049.5 1184.5 L1049.4 1184.5 L1049.4 1184.5 L1049.2 1184.5 L1049.1 1184.5 L1049.0 1184.5 L1048.8 1184.5 L1048.6 1184.5 L1048.4 1184.5 L1048.3 1184.5 L1048.1 1184.5 L1047.9 1184.5 L1047.7 1184.5 L1047.5 1184.5 L1047.3 1184.5 L1047.1 1184.5 L1046.9 1184.4 L1046.7 1184.4 L1046.5 1184.4 L1046.2 1184.3 L1045.9 1184.2 L1045.6 1184.1 L1045.1 1183.9 L1044.7 1183.8 L1044.3 1183.6 L1043.8 1183.4 L1043.3 1183.1 L1042.8 1182.9 L1042.3 1182.6 L1041.7 1182.3 L1041.1 1182.0 L1040.4 1181.6 L1039.7 1181.2 L1039.0 1180.8 L1038.2 1180.4 L1037.3 1179.9 L1036.4 1179.3 L1035.5 1178.8 L1034.6 1178.2 L1033.6 1177.6 L1032.5 1176.9 L1031.4 1176.2 L1030.3 1175.5 L1029.0 1174.7 L1027.7 1173.9 L1026.3 1173.1 L1024.8 1172.2 L1023.2 1171.2 L1021.5 1170.2 L1019.7 1169.2 L1017.8 1168.0 L1015.8 1166.8 L1013.7 1165.6 L1011.5 1164.3 L1009.2 1162.9 L1006.8 1161.5 L1004.3 1160.0 L1001.7 1158.3 L999.0 1156.5 L996.2 1154.6 L993.2 1152.6 L990.2 1150.4 L987.0 1148.1 L983.8 1145.6 L980.4 1142.9 L976.9 1139.9 L973.1 1136.5 L969.1 1132.7 L964.8 1128.3 L960.1 1123.4 L955.3 1118.0 L950.1 1112.0 L944.8 1105.5 L939.2 1098.3 L933.4 1090.5 L927.2 1081.8 L920.8 1072.3 L914.1 1061.9 L907.1 1050.4 L899.7 1037.9 L892.0 1024.3 L883.9 1009.6 L875.4 993.8 L866.5 976.6 L857.3 958.1 L847.8 938.1 L838.3 916.7 L828.8 893.8 L819.4 869.5 L810.0 843.7 L800.6 816.5 L791.3 787.8 L781.9 757.7 L772.7 726.4 L763.7 694.0 L755.1 660.8 L747.0 626.9 L739.4 592.6 L732.5 558.2 L726.3 523.7 L720.8 489.2 L716.1 455.0 L712.3 421.3 L709.5 388.5 L707.7 356.6 L707.0 325.7 L707.4 295.9 L709.0 267.1 L711.8 239.4 L715.8 213.2 L721.1 188.5 L727.6 165.5 L735.5 144.5 L744.5 125.3 L754.7 108.2 L765.9 93.4 L778.1 81.0 L791.1 70.9 L804.9 63.0 L819.4 57.2 L834.3 53.3 L849.6 51.2 L865.2 50.8 L881.2 51.9 L897.3 54.3 L913.6 57.6 L930.0 61.6 L946.5 66.3 L963.1 71.6 L979.6 77.2 L995.8 83.2 L1011.9 89.4 L1027.6 95.8 L1043.2 102.2 L1058.6 108.8 L1073.8 115.6 L1088.9 122.6 L1103.9 129.7 L1118.8 137.0 L1133.6 144.5 L1148.3 152.1 L1163.0 159.9 L1177.7 167.8 L1192.3 175.9 L1206.9 184.1 L1221.5 192.4 L1236.0 200.9 L1250.5 209.5 L1265.0 218.1 L1279.4 226.9 L1293.9 235.7 L1308.3 244.7 L1322.7 253.7 L1337.2 262.8 L1351.6 271.9 L1366.0 281.1 L1380.5 290.4 L1394.9 299.7 L1409.3 309.1 L1423.7 318.5 L1438.2 327.9 L1452.6 337.4 L1467.0 346.9 L1481.4 356.4 L1495.8 366.0 L1510.1 375.5 L1524.5 385.1 L1538.8 394.6 L1553.1 404.2 L1567.4 413.7 L1581.6 423.2 L1595.8 432.8 L1609.9 442.2 L1624.0 451.7 L1638.0 461.2 L1651.9 470.6 L1665.8 479.9 L1679.6 489.2 L1693.3 498.5 L1706.9 507.7 L1720.4 516.8 L1733.9 525.9 L1747.1 534.8 L1760.3 543.7 L1773.4 552.5 L1786.3 561.2 L1799.0 569.8 L1811.6 578.3 L1824.1 586.7 L1836.3 595.0 L1848.4 603.1 L1860.3 611.1 L1872.0 619.0 L1883.5 626.8 L1894.8 634.4 L1905.7 641.8 L1916.4 649.0 L1926.7 656.0 L1936.6 662.7 L1946.3 669.3 L1955.8 675.6 L1965.0 681.8 L1974.1 688.0 L1982.9 693.9 L1991.5 699.7 L1999.8 705.3 L2007.8 710.7 L2015.4 715.8 L2022.8 720.8 L2029.8 725.5 L2036.6 730.1 L2043.2 734.5 L2049.4 738.7 L2055.5 742.7 L2061.2 746.6 L2066.8 750.4 L2072.1 754.0 L2077.1 757.4 L2081.9 760.6 L2086.5 763.7 L2090.9 766.7 L2095.1 769.5 L2099.1 772.2 L2102.9 774.8 L2106.6 777.3 L2110.1 779.6 L2113.5 781.9 L2116.7 784.1 L2119.7 786.1 L2122.7 788.1 L2125.5 790.0 L2128.2 791.8 L2130.9 793.6 L2133.4 795.4 L2135.9 797.0 L2138.3 798.6 L2140.6 800.2 L2142.8 801.7 L2144.9 803.1 L2146.9 804.4 L2148.8 805.8 L2150.7 807.0 L2152.4 808.2 L2154.1 809.4 L2155.7 810.4 L2157.3 811.5 L2158.7 812.5 L2160.1 813.4 L2161.3 814.2 L2162.5 815.0 L2163.6 815.8 L2164.7 816.5 L2165.7 817.2 L2166.7 817.8 L2167.6 818.4 L2168.5 819.0 L2169.3 819.6 L2170.1 820.1 L2170.8 820.6 L2171.5 821.1 L2172.1 821.5 L2172.7 821.9 L2173.3 822.3 L2173.7 822.6 L2174.2 822.9 L2174.6 823.2 L2175.0 823.4 L2175.4 823.7 L2175.8 824.0 L2176.1 824.2 L2176.5 824.5 L2176.8 824.7 L2177.1 824.9 L2177.4 825.1 L2177.7 825.3 L2178.0 825.5 L2178.3 825.7 L2178.6 825.9 L2178.8 826.1 L2179.1 826.2 L2179.4 826.4 L2179.7 826.6 L2180.0 826.8 L2180.2 827.0 L2180.5 827.2 L2180.7 827.3 L2181.0 827.5 L2181.2 827.6 L2181.3 827.7 L2181.4 827.8 L2181.6 827.9 L2181.7 828.0 L2181.7 828.0 L2181.8 828.1 L2181.9 828.1 L2182.0 828.2 L2182.1 828.2 L2182.1 828.3 L2182.2 828.3 L2182.2 828.3 L2182.3 828.4 L2182.3 828.4 Z M1991.2 739.9 L1305.1 370.8 L1002.4 1109.0 Z" fill="#000" fill-opacity="0.40" fill-rule="evenodd"/><path d="M-5000 -5000 H8000 V8000 H-5000 Z M1051.0 1184.3 L1051.0 1184.3 L1050.9 1184.2 L1050.9 1184.2 L1050.9 1184.2 L1050.8 1184.2 L1050.7 1184.3 L1050.6 1184.3 L1050.6 1184.3 L1050.5 1184.3 L1050.4 1184.3 L1050.3 1184.3 L1050.2 1184.3 L1050.1 1184.3 L1050.0 1184.3 L1049.9 1184.3 L1049.8 1184.4 L1049.7 1184.4 L1049.6 1184.4 L1049.5 1184.5 L1049.4 1184.5 L1049.4 1184.5 L1049.2 1184.5 L1049.1 1184.5 L1049.0 1184.5 L1048.8 1184.5 L1048.6 1184.5 L1048.4 1184.5 L1048.3 1184.5 L1048.1 1184.5 L1047.9 1184.5 L1047.7 1184.5 L1047.5 1184.5 L1047.3 1184.5 L1047.1 1184.5 L1046.9 1184.4 L1046.7 1184.4 L1046.5 1184.4 L1046.2 1184.3 L1045.9 1184.2 L1045.6 1184.1 L1045.1 1183.9 L1044.7 1183.8 L1044.3 1183.6 L1043.8 1183.4 L1043.3 1183.1 L1042.8 1182.9 L1042.3 1182.6 L1041.7 1182.3 L1041.1 1182.0 L1040.4 1181.6 L1039.7 1181.2 L1039.0 1180.8 L1038.2 1180.4 L1037.3 1179.9 L1036.4 1179.3 L1035.5 1178.8 L1034.6 1178.2 L1033.6 1177.6 L1032.5 1176.9 L1031.4 1176.2 L1030.3 1175.5 L1029.0 1174.7 L1027.7 1173.9 L1026.3 1173.1 L1024.8 1172.2 L1023.2 1171.2 L1021.5 1170.2 L1019.7 1169.2 L1017.8 1168.0 L1015.8 1166.8 L1013.7 1165.6 L1011.5 1164.3 L1009.2 1162.9 L1006.8 1161.5 L1004.3 1160.0 L1001.7 1158.3 L999.0 1156.5 L996.2 1154.6 L993.2 1152.6 L990.2 1150.4 L987.0 1148.1 L983.8 1145.6 L980.4 1142.9 L976.9 1139.9 L973.1 1136.5 L969.1 1132.7 L964.8 1128.3 L960.1 1123.4 L955.3 1118.0 L950.1 1112.0 L944.8 1105.5 L939.2 1098.3 L933.4 1090.5 L927.2 1081.8 L920.8 1072.3 L914.1 1061.9 L907.1 1050.4 L899.7 1037.9 L892.0 1024.3 L883.9 1009.6 L875.4 993.8 L866.5 976.6 L857.3 958.1 L847.8 938.1 L838.3 916.7 L828.8 893.8 L819.4 869.5 L810.0 843.7 L800.6 816.5 L791.3 787.8 L781.9 757.7 L772.7 726.4 L763.7 694.0 L755.1 660.8 L747.0 626.9 L739.4 592.6 L732.5 558.2 L726.3 523.7 L720.8 489.2 L716.1 455.0 L712.3 421.3 L709.5 388.5 L707.7 356.6 L707.0 325.7 L707.4 295.9 L709.0 267.1 L711.8 239.4 L715.8 213.2 L721.1 188.5 L727.6 165.5 L735.5 144.5 L744.5 125.3 L754.7 108.2 L765.9 93.4 L778.1 81.0 L791.1 70.9 L804.9 63.0 L819.4 57.2 L834.3 53.3 L849.6 51.2 L865.2 50.8 L881.2 51.9 L897.3 54.3 L913.6 57.6 L930.0 61.6 L946.5 66.3 L963.1 71.6 L979.6 77.2 L995.8 83.2 L1011.9 89.4 L1027.6 95.8 L1043.2 102.2 L1058.6 108.8 L1073.8 115.6 L1088.9 122.6 L1103.9 129.7 L1118.8 137.0 L1133.6 144.5 L1148.3 152.1 L1163.0 159.9 L1177.7 167.8 L1192.3 175.9 L1206.9 184.1 L1221.5 192.4 L1236.0 200.9 L1250.5 209.5 L1265.0 218.1 L1279.4 226.9 L1293.9 235.7 L1308.3 244.7 L1322.7 253.7 L1337.2 262.8 L1351.6 271.9 L1366.0 281.1 L1380.5 290.4 L1394.9 299.7 L1409.3 309.1 L1423.7 318.5 L1438.2 327.9 L1452.6 337.4 L1467.0 346.9 L1481.4 356.4 L1495.8 366.0 L1510.1 375.5 L1524.5 385.1 L1538.8 394.6 L1553.1 404.2 L1567.4 413.7 L1581.6 423.2 L1595.8 432.8 L1609.9 442.2 L1624.0 451.7 L1638.0 461.2 L1651.9 470.6 L1665.8 479.9 L1679.6 489.2 L1693.3 498.5 L1706.9 507.7 L1720.4 516.8 L1733.9 525.9 L1747.1 534.8 L1760.3 543.7 L1773.4 552.5 L1786.3 561.2 L1799.0 569.8 L1811.6 578.3 L1824.1 586.7 L1836.3 595.0 L1848.4 603.1 L1860.3 611.1 L1872.0 619.0 L1883.5 626.8 L1894.8 634.4 L1905.7 641.8 L1916.4 649.0 L1926.7 656.0 L1936.6 662.7 L1946.3 669.3 L1955.8 675.6 L1965.0 681.8 L1974.1 688.0 L1982.9 693.9 L1991.5 699.7 L1999.8 705.3 L2007.8 710.7 L2015.4 715.8 L2022.8 720.8 L2029.8 725.5 L2036.6 730.1 L2043.2 734.5 L2049.4 738.7 L2055.5 742.7 L2061.2 746.6 L2066.8 750.4 L2072.1 754.0 L2077.1 757.4 L2081.9 760.6 L2086.5 763.7 L2090.9 766.7 L2095.1 769.5 L2099.1 772.2 L2102.9 774.8 L2106.6 777.3 L2110.1 779.6 L2113.5 781.9 L2116.7 784.1 L2119.7 786.1 L2122.7 788.1 L2125.5 790.0 L2128.2 791.8 L2130.9 793.6 L2133.4 795.4 L2135.9 797.0 L2138.3 798.6 L2140.6 800.2 L2142.8 801.7 L2144.9 803.1 L2146.9 804.4 L2148.8 805.8 L2150.7 807.0 L2152.4 808.2 L2154.1 809.4 L2155.7 810.4 L2157.3 811.5 L2158.7 812.5 L2160.1 813.4 L2161.3 814.2 L2162.5 815.0 L2163.6 815.8 L2164.7 816.5 L2165.7 817.2 L2166.7 817.8 L2167.6 818.4 L2168.5 819.0 L2169.3 819.6 L2170.1 820.1 L2170.8 820.6 L2171.5 821.1 L2172.1 821.5 L2172.7 821.9 L2173.3 822.3 L2173.7 822.6 L2174.2 822.9 L2174.6 823.2 L2175.0 823.4 L2175.4 823.7 L2175.8 824.0 L2176.1 824.2 L2176.5 824.5 L2176.8 824.7 L2177.1 824.9 L2177.4 825.1 L2177.7 825.3 L2178.0 825.5 L2178.3 825.7 L2178.6 825.9 L2178.8 826.1 L2179.1 826.2 L2179.4 826.4 L2179.7 826.6 L2180.0 826.8 L2180.2 827.0 L2180.5 827.2 L2180.7 827.3 L2181.0 827.5 L2181.2 827.6 L2181.3 827.7 L2181.4 827.8 L2181.6 827.9 L2181.7 828.0 L2181.7 828.0 L2181.8 828.1 L2181.9 828.1 L2182.0 828.2 L2182.1 828.2 L2182.1 828.3 L2182.2 828.3 L2182.2 828.3 L2182.3 828.4 L2182.3 828.4 Z" fill="#232323" fill-rule="evenodd"/>
<circle cx="1513.8" cy="434.5" r="4.30" fill="#d2c418" stroke="#000" stroke-width="1.15"/>
<circle cx="1491.0" cy="474.1" r="4.30" fill="#c8bc58" stroke="#000" stroke-width="1.15"/>
<circle cx="1443.8" cy="539.5" r="4.30" fill="#c0bc74" stroke="#000" stroke-width="1.15"/>
<rect x="1539.1" y="493.0" width="13" height="13" fill="none" stroke="#fff" stroke-opacity=".9" stroke-width="1.7"/>
<rect x="1493.9" y="543.7" width="13" height="13" fill="none" stroke="#fff" stroke-opacity=".9" stroke-width="1.7"/>
</g>
<rect x="1440.3" y="429.3" width="211.6" height="143.6" fill="none" stroke="#9a9a9a" stroke-width="1.6"/>
</svg>
</body></html>
